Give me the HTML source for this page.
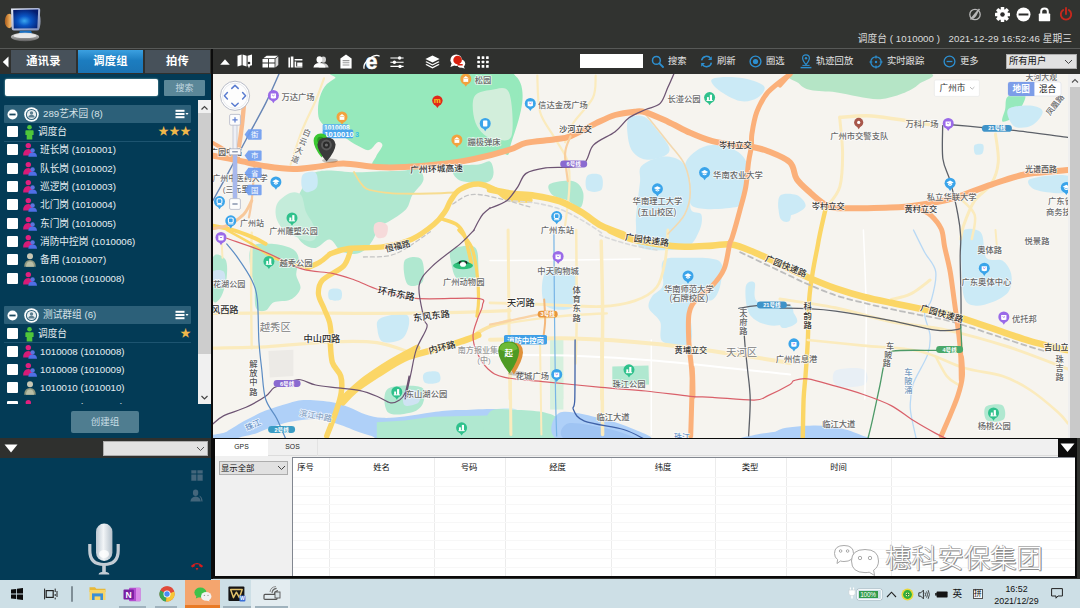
<!DOCTYPE html>
<html lang="zh-CN">
<head>
<meta charset="utf-8">
<title>调度台</title>
<style>
*{box-sizing:border-box;margin:0;padding:0}
html,body{width:1080px;height:608px;overflow:hidden;background:#313330}
body{position:relative;font-family:"Liberation Sans","Noto Sans CJK SC",sans-serif;font-size:9.7px;color:#e8eef2}
.abs{position:absolute}
#top{left:0;top:0;width:1080px;height:49px;background:#313330;border-bottom:1px solid #575957}
#status{letter-spacing:0.08px;right:8px;top:31px;height:16px;line-height:16px;font-size:9.7px;color:#dcdcdc;white-space:pre}
#tabrow{left:0;top:49px;width:1080px;height:25px;background:#2f302e}
.tab{top:50px;height:23px;width:65px;line-height:22px;text-align:center;font-size:11.3px;font-weight:bold;color:#fff;background:#47515a;letter-spacing:0.2px}
.tab.on{background:linear-gradient(#3ba0e0,#1c7dc0 45%,#1b74b4)}
#left{left:0;top:74px;width:211px;height:364px;background:#033b56}
#vline{left:211px;top:49px;width:2px;height:531px;background:#0c0c0c}
#sinput{left:5px;top:79px;width:153px;height:17px;background:#fff;border-radius:2px;box-shadow:0 0 2px #9cc}
#sbtn{left:164px;top:80px;width:41px;height:16px;background:#5b8798;color:#c3d8e0;font-size:9px;line-height:16px;text-align:center;border-radius:1px}
.ghead{left:4px;width:187px;height:18px;background:#2c6079;border-radius:1px}
.ghead span{position:absolute;left:39px;top:0;line-height:18px;font-size:9.7px;color:#d5e2e8}
.row{left:0;width:196px;height:18px}
.row .cb{position:absolute;left:7px;top:3px;width:11px;height:11px;background:#fff;border-radius:1px}
.row .tx{position:absolute;left:40px;top:0;line-height:18px;font-size:9.7px;color:#e6eef2;white-space:nowrap}
.row svg{position:absolute;left:22px;top:1px}
.stars{position:absolute;right:5px;top:0;line-height:17px;font-size:11px;color:#f0b84a;letter-spacing:0}
#lscroll{left:198px;top:100px;width:13px;height:304px;background:#f0f0f0}
#lthumb{left:198px;top:113px;width:13px;height:241px;background:#cdcdcd}
#mkgrp{left:71px;top:411px;width:68px;height:22px;background:#4f7d90;border-radius:2px;color:#c9dde5;font-size:9.5px;line-height:22px;text-align:center}
#sep{left:0;top:438px;width:211px;height:20px;background:#2f302e}
#sepdd{left:103px;top:441px;width:105px;height:15px;background:#e2e2e2;border:1px solid #adadad}
#low{left:0;top:458px;width:211px;height:122px;background:#033b56}
#tool{left:213px;top:49px;width:867px;height:25px;background:#2f302e}
.tl{top:54px;height:15px;line-height:15px;font-size:9.3px;color:#e4e4e4;white-space:nowrap}
#tinput{left:580px;top:54px;width:63px;height:14px;background:#fff}
#usersel{left:1006px;top:54px;width:71px;height:15px;background:#e1e1e1;border:1px solid #adadad;color:#111;font-size:9.3px;line-height:13px;padding-left:2px}
#mapwrap{left:213px;top:74px;width:855px;height:365px;background:#f6f4ef;overflow:hidden}
#mscroll{left:1068px;top:74px;width:12px;height:364px;background:#efefef}
#mthumb{left:1070px;top:87px;width:10px;height:351px;background:#c9c9c9}
#bp{left:213px;top:438px;width:864px;height:140px;background:#f0f0f0;border:2px solid #0a0a0a}
#bptabs{left:215px;top:439px;width:860px;height:17px;background:#f0f0f0;border-bottom:1px solid #dcdcdc}
.bt{top:439px;height:17px;line-height:16px;font-size:6.8px;color:#222;text-align:center}
#bpdd{left:219px;top:461px;width:69px;height:14px;background:#e1e1e1;border:1px solid #adadad;color:#111;font-size:8.4px;line-height:12px;padding-left:1px}
#tbl{left:292px;top:457px;width:783px;height:119px;background:#fff;border-left:1px solid #828790;border-top:1px solid #828790}
.th{top:459px;height:16px;line-height:16px;font-size:8.4px;color:#111;text-align:center;width:40px;margin-left:-20px}
.cl{top:458px;width:1px;height:118px;background:#ececec}
#bpbtn{left:1058px;top:439px;width:18px;height:18px;background:#0c0c0c}
#task{left:0;top:579px;width:1080px;height:29px;background:#cddfe6}
#wm{left:885px;top:541px;font-size:26.3px;line-height:36px;color:#fff;white-space:nowrap;text-shadow:1px 1px 0 #8c8c8c,-0.6px -0.6px 0 #b4b4b4,1px 0 0 #9a9a9a,0 1px 0 #9a9a9a;font-weight:300}
.tk{color:#111;font-size:10.5px;line-height:12px;white-space:nowrap}
</style>
</head>
<body>
<div id="top" class="abs"></div>
<svg class="abs" style="left:3px;top:5px" width="40" height="38" viewBox="0 0 40 38">
<defs><radialGradient id="lgscr" cx="0.45" cy="0.6" r="0.65"><stop offset="0" stop-color="#3aa8f0"/><stop offset="0.4" stop-color="#0a55c4"/><stop offset="1" stop-color="#051c6e"/></radialGradient>
<linearGradient id="lgor" x1="0" x2="1"><stop offset="0" stop-color="#a85a18"/><stop offset="0.55" stop-color="#e8a858"/><stop offset="1" stop-color="#d8d0c0"/></linearGradient>
<linearGradient id="lgbase" x1="0" x2="0" y1="0" y2="1"><stop offset="0" stop-color="#e6e6e6"/><stop offset="1" stop-color="#5e5e5e"/></linearGradient>
<linearGradient id="lgfr" x1="0" x2="1" y1="0" y2="1"><stop offset="0" stop-color="#e8ecf8"/><stop offset="0.5" stop-color="#a8b4d8"/><stop offset="1" stop-color="#7d8cb8"/></linearGradient></defs>
<ellipse cx="6.2" cy="16" rx="4.4" ry="7.2" fill="url(#lgor)"/>
<ellipse cx="35.2" cy="16" rx="2.4" ry="8.6" fill="#8e96aa"/>
<path d="M8 3.6 L35 3.1 Q37.4 3.1 37.2 5.5 L36.2 23.4 Q36.1 25.6 33.8 25.6 L10.8 25.4 Q8.8 25.4 8.7 23.4 Z" fill="url(#lgfr)"/>
<path d="M10.2 5 L35.2 4.6 L34.3 23.2 L10.8 23.4 Z" fill="url(#lgscr)"/>
<path d="M17 25.8 H28 L29.5 29.5 H15.5 Z" fill="#1a6fc0"/>
<ellipse cx="22" cy="32" rx="14.2" ry="4.2" fill="url(#lgbase)"/>
<ellipse cx="22" cy="30.8" rx="11.5" ry="2.3" fill="#e9e9e9"/>
</svg>
<svg class="abs" style="left:968px;top:8px" width="14" height="13" viewBox="0 0 14 13"><circle cx="7" cy="6.5" r="5.2" fill="none" stroke="#b8b8b8" stroke-width="1.3"/><path d="M2.5 11.5 L11.5 1" stroke="#b8b8b8" stroke-width="1.5"/><path d="M4.2 11.6 Q5 6 10.4 2.2 Q9.6 8.2 4.2 11.6Z" fill="#b8b8b8"/></svg><svg class="abs" style="left:995px;top:7px" width="15" height="15" viewBox="0 0 14.6 14.6"><rect x="5.6" y="0" width="3.4" height="4" rx="0.5" transform="rotate(0 7.3 7.3)" fill="#fff"/><rect x="5.6" y="0" width="3.4" height="4" rx="0.5" transform="rotate(45 7.3 7.3)" fill="#fff"/><rect x="5.6" y="0" width="3.4" height="4" rx="0.5" transform="rotate(90 7.3 7.3)" fill="#fff"/><rect x="5.6" y="0" width="3.4" height="4" rx="0.5" transform="rotate(135 7.3 7.3)" fill="#fff"/><rect x="5.6" y="0" width="3.4" height="4" rx="0.5" transform="rotate(180 7.3 7.3)" fill="#fff"/><rect x="5.6" y="0" width="3.4" height="4" rx="0.5" transform="rotate(225 7.3 7.3)" fill="#fff"/><rect x="5.6" y="0" width="3.4" height="4" rx="0.5" transform="rotate(270 7.3 7.3)" fill="#fff"/><rect x="5.6" y="0" width="3.4" height="4" rx="0.5" transform="rotate(315 7.3 7.3)" fill="#fff"/><circle cx="7.3" cy="7.3" r="5.4" fill="#fff"/><circle cx="7.3" cy="7.3" r="2.2" fill="#2c2c2c"/></svg><svg class="abs" style="left:1016px;top:7px" width="15" height="15" viewBox="0 0 15 15"><circle cx="7.5" cy="7.5" r="7" fill="#fff"/><rect x="2.6" y="6.5" width="9.8" height="2" fill="#2c2c2c"/></svg><svg class="abs" style="left:1038px;top:7px" width="13" height="15" viewBox="0 0 13 15"><path d="M3.2 7 V4.6 Q3.2 1.6 6.5 1.6 Q9.8 1.6 9.8 4.6 V7" fill="none" stroke="#fff" stroke-width="2"/><rect x="0.8" y="6.6" width="11.4" height="7.6" rx="0.6" fill="#fff"/></svg><svg class="abs" style="left:1059px;top:7px" width="14" height="14" viewBox="0 0 14 14"><path d="M4.2 3 A5.2 5.2 0 1 0 9.8 3" fill="none" stroke="#c4281d" stroke-width="1.9" stroke-linecap="round"/><path d="M7 1 V7" stroke="#c4281d" stroke-width="1.9" stroke-linecap="round"/></svg>
<div id="status" class="abs">调度台 ( 1010000 )   2021-12-29 16:52:46 星期三</div>
<div id="tabrow" class="abs"></div>
<div id="tool" class="abs"></div>
<svg class="abs" style="left:2px;top:56px" width="8" height="12" viewBox="0 0 8 12"><path d="M6.5 0.5 L0.8 6 L6.5 11.5 Z" fill="#fff"/></svg>
<div class="abs tab" style="left:11px">通讯录</div>
<div class="abs tab on" style="left:78px">调度组</div>
<div class="abs tab" style="left:145px">拍传</div>
<div id="left" class="abs"></div>
<div id="sinput" class="abs"></div>
<div id="sbtn" class="abs">搜索</div>
<div class="abs ghead" style="top:105px"><svg class="abs" style="left:3px;top:4px" width="11" height="11" viewBox="0 0 11 11"><circle cx="5.5" cy="5.5" r="5" fill="#fff"/><rect x="2.4" y="4.6" width="6.2" height="1.8" fill="#1d4a60"/></svg><svg class="abs" style="left:19px;top:1px" width="17" height="17" viewBox="0 0 17 17"><circle cx="8.5" cy="8.5" r="7.3" fill="#fff"/><circle cx="8.5" cy="8.5" r="5.6" fill="#2c6079"/><circle cx="8.5" cy="8.5" r="4.6" fill="#e8eef0"/><circle cx="8.5" cy="7" r="1.7" fill="#5c7f90"/><path d="M5.3 11.6 Q5.5 8.8 8.5 8.8 Q11.5 8.8 11.7 11.6 Z" fill="#5c7f90"/></svg><span>289艺术园 (8)</span><svg class="abs" style="left:171px;top:4px" width="14" height="10" viewBox="0 0 14 10"><rect x="0.5" y="0.8" width="9" height="2" fill="#fff"/><rect x="0.5" y="4" width="9" height="2" fill="#fff"/><rect x="0.5" y="7.2" width="9" height="2" fill="#fff"/><path d="M10.5 4 H13.5 L12 6 Z" fill="#fff"/></svg></div>
<div class="abs row" style="top:123.0px"><div class="cb"></div><svg width="15" height="16" viewBox="0 0 15 16"><circle cx="7.5" cy="3.2" r="2.3" fill="#4fc63a"/><path d="M4.2 6.2 H10.8 Q11.6 6.2 11.6 7 V11 H10.3 V15.5 H4.7 V11 H3.4 V7 Q3.4 6.2 4.2 6.2Z" fill="#4fc63a"/></svg><div class="tx" style="left:38px">调度台</div><div class="stars">★★★</div></div>
<div class="abs row" style="top:141.3px"><div class="cb"></div><svg width="16" height="16" viewBox="0 0 16 16"><circle cx="6.3" cy="3.6" r="2.7" fill="#e0207e"/><path d="M1.2 13.5 Q1.2 7 6.3 7 Q11 7 11.3 13.5 Z" fill="#d81b78"/><circle cx="10.6" cy="8.4" r="2.2" fill="#5a74e0"/><path d="M6.3 14.8 Q6.5 10.6 10.6 10.6 Q14.8 10.6 15 14.8 Z" fill="#4f6fe6"/></svg><div class="tx">班长岗 (1010001)</div></div>
<div class="abs row" style="top:159.6px"><div class="cb"></div><svg width="16" height="16" viewBox="0 0 16 16"><circle cx="6.3" cy="3.6" r="2.7" fill="#e0207e"/><path d="M1.2 13.5 Q1.2 7 6.3 7 Q11 7 11.3 13.5 Z" fill="#d81b78"/><circle cx="10.6" cy="8.4" r="2.2" fill="#5a74e0"/><path d="M6.3 14.8 Q6.5 10.6 10.6 10.6 Q14.8 10.6 15 14.8 Z" fill="#4f6fe6"/></svg><div class="tx">队长岗 (1010002)</div></div>
<div class="abs row" style="top:177.9px"><div class="cb"></div><svg width="16" height="16" viewBox="0 0 16 16"><circle cx="6.3" cy="3.6" r="2.7" fill="#e0207e"/><path d="M1.2 13.5 Q1.2 7 6.3 7 Q11 7 11.3 13.5 Z" fill="#d81b78"/><circle cx="10.6" cy="8.4" r="2.2" fill="#5a74e0"/><path d="M6.3 14.8 Q6.5 10.6 10.6 10.6 Q14.8 10.6 15 14.8 Z" fill="#4f6fe6"/></svg><div class="tx">巡逻岗 (1010003)</div></div>
<div class="abs row" style="top:196.2px"><div class="cb"></div><svg width="16" height="16" viewBox="0 0 16 16"><circle cx="6.3" cy="3.6" r="2.7" fill="#e0207e"/><path d="M1.2 13.5 Q1.2 7 6.3 7 Q11 7 11.3 13.5 Z" fill="#d81b78"/><circle cx="10.6" cy="8.4" r="2.2" fill="#5a74e0"/><path d="M6.3 14.8 Q6.5 10.6 10.6 10.6 Q14.8 10.6 15 14.8 Z" fill="#4f6fe6"/></svg><div class="tx">北门岗 (1010004)</div></div>
<div class="abs row" style="top:214.6px"><div class="cb"></div><svg width="16" height="16" viewBox="0 0 16 16"><circle cx="6.3" cy="3.6" r="2.7" fill="#e0207e"/><path d="M1.2 13.5 Q1.2 7 6.3 7 Q11 7 11.3 13.5 Z" fill="#d81b78"/><circle cx="10.6" cy="8.4" r="2.2" fill="#5a74e0"/><path d="M6.3 14.8 Q6.5 10.6 10.6 10.6 Q14.8 10.6 15 14.8 Z" fill="#4f6fe6"/></svg><div class="tx">东门岗 (1010005)</div></div>
<div class="abs row" style="top:232.9px"><div class="cb"></div><svg width="16" height="16" viewBox="0 0 16 16"><circle cx="6.3" cy="3.6" r="2.7" fill="#e0207e"/><path d="M1.2 13.5 Q1.2 7 6.3 7 Q11 7 11.3 13.5 Z" fill="#d81b78"/><circle cx="10.6" cy="8.4" r="2.2" fill="#5a74e0"/><path d="M6.3 14.8 Q6.5 10.6 10.6 10.6 Q14.8 10.6 15 14.8 Z" fill="#4f6fe6"/></svg><div class="tx">消防中控岗 (1010006)</div></div>
<div class="abs row" style="top:251.2px"><div class="cb"></div><svg width="16" height="16" viewBox="0 0 16 16"><circle cx="8" cy="4.3" r="3" fill="#c9c8b4"/><path d="M2.2 14.8 Q2.4 8 8 8 Q13.6 8 13.8 14.8 Z" fill="#8f977f"/><path d="M4 14.8 Q4.2 9.5 8 9.5 Q11.8 9.5 12 14.8 Z" fill="#b9bea6"/></svg><div class="tx">备用 (1010007)</div></div>
<div class="abs row" style="top:269.5px"><div class="cb"></div><svg width="16" height="16" viewBox="0 0 16 16"><circle cx="6.3" cy="3.6" r="2.7" fill="#e0207e"/><path d="M1.2 13.5 Q1.2 7 6.3 7 Q11 7 11.3 13.5 Z" fill="#d81b78"/><circle cx="10.6" cy="8.4" r="2.2" fill="#5a74e0"/><path d="M6.3 14.8 Q6.5 10.6 10.6 10.6 Q14.8 10.6 15 14.8 Z" fill="#4f6fe6"/></svg><div class="tx">1010008 (1010008)</div></div>
<div class="abs" style="left:4px;top:141px;width:187px;height:1px;background:#1d5470"></div>
<div class="abs ghead" style="top:306px"><svg class="abs" style="left:3px;top:4px" width="11" height="11" viewBox="0 0 11 11"><circle cx="5.5" cy="5.5" r="5" fill="#fff"/><rect x="2.4" y="4.6" width="6.2" height="1.8" fill="#1d4a60"/></svg><svg class="abs" style="left:19px;top:1px" width="17" height="17" viewBox="0 0 17 17"><circle cx="8.5" cy="8.5" r="7.3" fill="#fff"/><circle cx="8.5" cy="8.5" r="5.6" fill="#2c6079"/><circle cx="8.5" cy="8.5" r="4.6" fill="#e8eef0"/><circle cx="8.5" cy="7" r="1.7" fill="#5c7f90"/><path d="M5.3 11.6 Q5.5 8.8 8.5 8.8 Q11.5 8.8 11.7 11.6 Z" fill="#5c7f90"/></svg><span>测试群组 (6)</span><svg class="abs" style="left:171px;top:4px" width="14" height="10" viewBox="0 0 14 10"><rect x="0.5" y="0.8" width="9" height="2" fill="#fff"/><rect x="0.5" y="4" width="9" height="2" fill="#fff"/><rect x="0.5" y="7.2" width="9" height="2" fill="#fff"/><path d="M10.5 4 H13.5 L12 6 Z" fill="#fff"/></svg></div>
<div class="abs row" style="top:324.5px"><div class="cb"></div><svg width="15" height="16" viewBox="0 0 15 16"><circle cx="7.5" cy="3.2" r="2.3" fill="#4fc63a"/><path d="M4.2 6.2 H10.8 Q11.6 6.2 11.6 7 V11 H10.3 V15.5 H4.7 V11 H3.4 V7 Q3.4 6.2 4.2 6.2Z" fill="#4fc63a"/></svg><div class="tx" style="left:38px">调度台</div><div class="stars">★</div></div>
<div class="abs row" style="top:342.8px"><div class="cb"></div><svg width="16" height="16" viewBox="0 0 16 16"><circle cx="6.3" cy="3.6" r="2.7" fill="#e0207e"/><path d="M1.2 13.5 Q1.2 7 6.3 7 Q11 7 11.3 13.5 Z" fill="#d81b78"/><circle cx="10.6" cy="8.4" r="2.2" fill="#5a74e0"/><path d="M6.3 14.8 Q6.5 10.6 10.6 10.6 Q14.8 10.6 15 14.8 Z" fill="#4f6fe6"/></svg><div class="tx">1010008 (1010008)</div></div>
<div class="abs row" style="top:361.1px"><div class="cb"></div><svg width="16" height="16" viewBox="0 0 16 16"><circle cx="6.3" cy="3.6" r="2.7" fill="#e0207e"/><path d="M1.2 13.5 Q1.2 7 6.3 7 Q11 7 11.3 13.5 Z" fill="#d81b78"/><circle cx="10.6" cy="8.4" r="2.2" fill="#5a74e0"/><path d="M6.3 14.8 Q6.5 10.6 10.6 10.6 Q14.8 10.6 15 14.8 Z" fill="#4f6fe6"/></svg><div class="tx">1010009 (1010009)</div></div>
<div class="abs row" style="top:379.4px"><div class="cb"></div><svg width="16" height="16" viewBox="0 0 16 16"><circle cx="8" cy="4.3" r="3" fill="#c9c8b4"/><path d="M2.2 14.8 Q2.4 8 8 8 Q13.6 8 13.8 14.8 Z" fill="#8f977f"/><path d="M4 14.8 Q4.2 9.5 8 9.5 Q11.8 9.5 12 14.8 Z" fill="#b9bea6"/></svg><div class="tx">1010010 (1010010)</div></div>
<div class="abs" style="left:4px;top:342px;width:187px;height:1px;background:#1d5470"></div>
<div class="abs row" style="top:398.0px;height:6px;overflow:hidden"><div class="cb"></div><svg width="16" height="16" viewBox="0 0 16 16"><circle cx="6.3" cy="3.6" r="2.7" fill="#e0207e"/><path d="M1.2 13.5 Q1.2 7 6.3 7 Q11 7 11.3 13.5 Z" fill="#d81b78"/><circle cx="10.6" cy="8.4" r="2.2" fill="#5a74e0"/><path d="M6.3 14.8 Q6.5 10.6 10.6 10.6 Q14.8 10.6 15 14.8 Z" fill="#4f6fe6"/></svg><div class="tx">1010011 (1010011)</div></div>
<div id="lscroll" class="abs"></div>
<div id="lthumb" class="abs"></div>
<svg class="abs" style="left:198px;top:100px" width="13" height="304" viewBox="0 0 13 304"><path d="M3.5 9.5 L6.5 6.5 L9.5 9.5" fill="none" stroke="#444" stroke-width="1.2"/><path d="M3.5 296 L6.5 299 L9.5 296" fill="none" stroke="#444" stroke-width="1.2"/></svg>
<div id="mkgrp" class="abs">创建组</div>
<div id="sep" class="abs"></div>
<svg class="abs" style="left:4px;top:444px" width="14" height="9" viewBox="0 0 14 9"><path d="M0.5 0.5 H13.5 L7 8.5 Z" fill="#fff"/></svg>
<div id="sepdd" class="abs"></div>
<svg class="abs" style="left:196px;top:446px" width="9" height="6" viewBox="0 0 9 6"><path d="M1 1 L4.5 4.5 L8 1" fill="none" stroke="#555" stroke-width="1"/></svg>
<div id="low" class="abs"></div>
<svg class="abs" style="left:191px;top:470px" width="12" height="11" viewBox="0 0 12 11"><path d="M0.3 0.3 H5.4 V3.6 H0.3Z M6.4 0.3 H11.7 V3.6 H6.4Z M0.3 4.6 H5.4 V10.7 H0.3Z M6.4 4.6 H11.7 V10.7 H6.4Z" fill="#44667b"/></svg><svg class="abs" style="left:190px;top:489px" width="13" height="13" viewBox="0 0 13 13"><ellipse cx="5.6" cy="3.8" rx="2.7" ry="3.3" fill="#44667b"/><path d="M0.4 12.6 Q0.8 7.6 5.6 7.4 Q10.4 7.6 10.8 12.6Z" fill="#44667b"/><path d="M9 6.4 Q12.4 7.4 12.6 12.6 H11.4 Q11.4 8.6 9 6.4Z" fill="#44667b"/></svg><svg class="abs" style="left:190px;top:561px" width="14" height="10" viewBox="0 0 14 10"><path d="M0.8 5 Q7 -1.2 13.2 5 L11.6 6.6 L9.2 5.2 V3.6 Q7 2.8 4.8 3.6 V5.2 L2.4 6.6Z" fill="#d81c1c"/><path d="M5.6 7 H8.4 L7 9.4Z" fill="#d81c1c"/></svg><svg class="abs" style="left:86px;top:521px" width="36" height="56" viewBox="0 0 36 56">
<defs><linearGradient id="mcg" x1="0" x2="1"><stop offset="0" stop-color="#bcc8d2"/><stop offset="0.45" stop-color="#f2f5f7"/><stop offset="1" stop-color="#b4c0ca"/></linearGradient></defs>
<path d="M3.8 23 V29.5 Q3.8 43.5 18 43.5 Q32.2 43.5 32.2 29.5 V23" fill="none" stroke="#c3ccd4" stroke-width="3.2"/>
<rect x="16.2" y="43" width="3.6" height="9" fill="#c3ccd4"/>
<path d="M12.6 53.6 Q12.8 50.8 18 50.8 Q23.2 50.8 23.4 53.6Z" fill="#c3ccd4"/>
<rect x="10" y="2.5" width="16.4" height="37.5" rx="8.2" fill="url(#mcg)"/>
<ellipse cx="18" cy="33" rx="5" ry="4" fill="#fff" opacity="0.8"/>
</svg>
<div id="vline" class="abs"></div>
<svg class="abs" style="left:220px;top:59px" width="10" height="6" viewBox="0 0 10 6"><path d="M5 0.2 L9.8 5.8 H0.2Z" fill="#fff"/></svg><svg class="abs" style="left:237px;top:54px" width="16" height="15" viewBox="0 0 16 15"><path d="M0.5 1.8 L4.6 0.6 L4.6 11.2 L0.5 12.4Z M5.6 0.6 L9.6 1.8 V12.4 L5.6 11.2Z M10.6 1.8 L15 0.6 V11.2 L13 11.8 L12 14.2 L11 11.9 L10.6 12.4Z" fill="#fff"/><circle cx="12" cy="9" r="1.3" fill="#2b2b2b"/></svg><svg class="abs" style="left:262px;top:55px" width="17" height="13" viewBox="0 0 17 13"><path d="M0.5 4 H6 V7.6 H0.5Z M6.9 4 H12.6 V7.6 H6.9Z M0.5 8.5 H6 V12.4 H0.5Z M6.9 8.5 H12.6 V12.4 H6.9Z" fill="#fff"/><path d="M1.4 3.2 L4.6 0.8 H16 L12.8 3.2Z" fill="#fff"/><path d="M13.4 3.8 L16.3 1.6 V10 L13.4 12.4Z" fill="#d8d8d8"/></svg><svg class="abs" style="left:288px;top:56px" width="15" height="12" viewBox="0 0 15 12"><path d="M0.4 1.6 H2 V11.6 H0.4Z M2.8 0.4 H5.4 V11.6 H2.8Z" fill="#fff"/><path d="M6.6 3 H14.4 V4.6 H6.6Z M6.6 5.6 H8.2 V11.6 H6.6Z M9.2 6.6 H14.4 V10.2 H9.2Z M6.6 10.6 H14.4 V11.6 H6.6Z" fill="#fff"/></svg><svg class="abs" style="left:313px;top:56px" width="16" height="12" viewBox="0 0 16 12"><ellipse cx="10.4" cy="3.6" rx="2.6" ry="3.2" fill="#cfcfcf"/><path d="M5.6 11.6 Q6 7.4 10.4 7.2 Q15 7.4 15.6 11.6Z" fill="#cfcfcf"/><ellipse cx="6.4" cy="3.6" rx="2.9" ry="3.4" fill="#fff"/><path d="M0.4 11.6 Q1 7 6.4 7 Q11.8 7 12.4 11.6Z" fill="#fff"/></svg><svg class="abs" style="left:340px;top:54px" width="12" height="15" viewBox="0 0 12 15"><path d="M6 0.4 L11.6 4.4 V14.4 H0.4 V4.4Z" fill="#fff"/><path d="M2.6 6.6 H9.4 M2.6 8.8 H9.4 M2.6 11 H9.4" stroke="#9a9a9a" stroke-width="1.1"/></svg><svg class="abs" style="left:362px;top:52px" width="20" height="19" viewBox="0 0 20 19"><text x="3.6" y="16.6" font-family="Liberation Sans,sans-serif" font-weight="bold" font-size="21.5" fill="#fff" stroke="#fff" stroke-width="0.5">e</text><path d="M2.2 16.8 Q0.6 12.4 7.4 6.6 Q13.8 1.6 17.6 4.2" fill="none" stroke="#fff" stroke-width="1.3"/></svg><svg class="abs" style="left:390px;top:56px" width="14" height="12" viewBox="0 0 14 12"><path d="M0.4 2 H13.6 M0.4 6.2 H13.6 M0.4 10.4 H13.6" stroke="#fff" stroke-width="1.1"/><circle cx="9.6" cy="2" r="1.7" fill="#fff"/><circle cx="4.4" cy="6.2" r="1.7" fill="#fff"/><circle cx="10" cy="10.4" r="1.7" fill="#fff"/></svg><svg class="abs" style="left:425px;top:55px" width="15" height="14" viewBox="0 0 15 14"><path d="M7.5 0.4 L14.6 4 L7.5 7.6 L0.4 4Z" fill="#fff"/><path d="M1.6 6.2 L0.4 6.9 L7.5 10.5 L14.6 6.9 L13.4 6.2 L7.5 9.2Z" fill="#fff"/><path d="M1.6 9.1 L0.4 9.8 L7.5 13.4 L14.6 9.8 L13.4 9.1 L7.5 12.1Z" fill="#fff"/></svg><svg class="abs" style="left:449px;top:54px" width="17" height="15" viewBox="0 0 17 15"><circle cx="7.2" cy="6.2" r="5.8" fill="#fff"/><path d="M2.6 9.6 L1.4 13 L5.4 11.4Z" fill="#fff"/><circle cx="12" cy="9.6" r="4.2" fill="#fff"/><path d="M14.4 12.6 L16 14.6 L12.4 13.8Z" fill="#fff"/><circle cx="8.6" cy="6" r="4.3" fill="#d8200f"/><rect x="8.4" y="10" width="5.4" height="1.6" rx="0.6" fill="#d8200f"/></svg><svg class="abs" style="left:477px;top:56px" width="12" height="12" viewBox="0 0 11.8 11.8"><rect x="0.3" y="0.3" width="2.6" height="2.6" rx="0.5" fill="#fff"/><rect x="0.3" y="4.6" width="2.6" height="2.6" rx="0.5" fill="#fff"/><rect x="0.3" y="8.9" width="2.6" height="2.6" rx="0.5" fill="#fff"/><rect x="4.6" y="0.3" width="2.6" height="2.6" rx="0.5" fill="#fff"/><rect x="4.6" y="4.6" width="2.6" height="2.6" rx="0.5" fill="#fff"/><rect x="4.6" y="8.9" width="2.6" height="2.6" rx="0.5" fill="#fff"/><rect x="8.9" y="0.3" width="2.6" height="2.6" rx="0.5" fill="#fff"/><rect x="8.9" y="4.6" width="2.6" height="2.6" rx="0.5" fill="#fff"/><rect x="8.9" y="8.9" width="2.6" height="2.6" rx="0.5" fill="#fff"/></svg><div id="tinput" class="abs"></div><svg class="abs" style="left:651px;top:55px" width="13" height="13" viewBox="0 0 13 13"><circle cx="5.4" cy="5.4" r="3.9" fill="none" stroke="#2d8fd0" stroke-width="1.5"/><path d="M8.4 8.4 L12 12" stroke="#2d8fd0" stroke-width="1.8" stroke-linecap="round"/></svg><div class="abs tl" style="left:668px">搜索</div><svg class="abs" style="left:700px;top:55px" width="13" height="13" viewBox="0 0 13 13"><path d="M1.6 5.4 A5 5 0 0 1 10.6 3.4" fill="none" stroke="#2d8fd0" stroke-width="1.5"/><path d="M11.4 7.6 A5 5 0 0 1 2.4 9.6" fill="none" stroke="#2d8fd0" stroke-width="1.5"/><path d="M11.8 1.2 V5 H8Z" fill="#2d8fd0"/><path d="M1.2 11.8 V8 H5Z" fill="#2d8fd0"/></svg><div class="abs tl" style="left:717px">刷新</div><svg class="abs" style="left:749px;top:55px" width="13" height="13" viewBox="0 0 13 13"><circle cx="6.5" cy="6.5" r="5.4" fill="none" stroke="#2d8fd0" stroke-width="1.4"/><circle cx="6.5" cy="6.5" r="2.6" fill="#2d8fd0"/></svg><div class="abs tl" style="left:766px">圈选</div><svg class="abs" style="left:800px;top:54px" width="12" height="15" viewBox="0 0 12 15"><path d="M6 0.8 Q9.4 0.8 9.4 4.2 Q9.4 6.4 6 10.6 Q2.6 6.4 2.6 4.2 Q2.6 0.8 6 0.8Z" fill="none" stroke="#2d8fd0" stroke-width="1.2"/><circle cx="6" cy="4.2" r="1.2" fill="#2d8fd0"/><path d="M0.6 13.6 H11.4" stroke="#2d8fd0" stroke-width="1.4"/><path d="M2.4 11.4 H9.6" stroke="#2d8fd0" stroke-width="1"/></svg><div class="abs tl" style="left:816px">轨迹回放</div><svg class="abs" style="left:869px;top:55px" width="14" height="14" viewBox="0 0 14 14"><circle cx="7" cy="7" r="5.2" fill="none" stroke="#2d8fd0" stroke-width="1.3"/><path d="M7 0.4 V3.4 M7 10.6 V13.6 M0.4 7 H3.4 M10.6 7 H13.6" stroke="#2d8fd0" stroke-width="1.2"/><circle cx="7" cy="7" r="1.2" fill="#2d8fd0"/></svg><div class="abs tl" style="left:887px">实时跟踪</div><svg class="abs" style="left:943px;top:55px" width="13" height="13" viewBox="0 0 13 13"><circle cx="6.5" cy="6.5" r="5.4" fill="none" stroke="#2d8fd0" stroke-width="1.3"/><path d="M3.6 6.5 H9.4" stroke="#2d8fd0" stroke-width="1.3"/></svg><div class="abs tl" style="left:960px">更多</div><div id="usersel" class="abs">所有用户</div><svg class="abs" style="left:1064px;top:59px" width="9" height="6" viewBox="0 0 9 6"><path d="M1 1 L4.5 4.5 L8 1" fill="none" stroke="#444" stroke-width="1"/></svg>
<div id="mapwrap" class="abs">
<svg class="abs" style="left:0;top:0" width="855" height="364" viewBox="213 74 855 364"><path d="M345.1 72.2 C316.0 73.2 338.5 75.9 335.1 78.3 C331.7 80.8 327.3 82.8 324.6 86.7 C321.8 90.6 319.7 96.7 318.7 101.7 C317.7 106.7 317.8 112.7 318.4 116.4 C319.1 120.1 320.8 121.8 322.6 123.9 C324.5 126.1 326.1 127.1 329.6 129.2 C333.0 131.4 338.8 134.0 343.5 136.7 C348.1 139.5 353.1 143.4 357.4 145.6 C361.6 147.8 365.7 150.6 369.0 150.1 C372.4 149.5 375.4 143.0 377.7 142.3 C379.9 141.5 382.7 143.2 382.4 145.6 C382.1 148.0 377.4 153.4 376.0 156.7 C374.6 160.1 369.3 164.3 374.0 165.9 C378.8 167.6 392.6 167.2 404.6 166.8 C416.7 166.3 434.7 164.5 446.3 163.1 C457.9 161.8 465.3 160.2 474.1 158.4 C482.9 156.6 493.2 154.0 499.2 152.3 C505.1 150.6 508.2 161.8 510.0 148.4 C511.8 135.1 537.5 84.9 510.0 72.2 C482.5 59.5 374.3 71.2 345.1 72.2Z" fill="#96e9bc"/>
<path d="M490.0 72.2 C493.5 60.0 506.4 70.7 510.9 72.2 C515.3 73.7 515.7 77.3 517.0 81.1 C518.2 84.9 518.8 90.9 518.4 95.0 C517.9 99.2 516.9 103.4 514.5 106.1 C512.1 108.9 506.6 108.5 503.9 111.7 C501.2 114.9 499.7 120.6 498.3 125.6 C497.0 130.6 497.0 138.4 495.6 141.7 C494.2 145.1 490.9 157.2 490.0 145.6 C489.1 134.0 486.5 84.5 490.0 72.2Z" fill="#96e9bc"/>
<path d="M476.1 94.5 C479.1 91.8 485.3 90.4 490.8 90.0 C496.3 89.6 505.4 84.7 508.9 92.2 C512.4 99.8 513.8 127.5 511.7 135.3 C509.6 143.2 501.0 139.6 496.4 139.5 C491.7 139.4 487.3 137.3 483.9 134.5 C480.4 131.7 477.4 127.6 475.5 122.8 C473.7 118.1 472.7 110.9 472.7 106.1 C472.8 101.4 473.1 97.2 476.1 94.5Z" fill="#d2eedb"/>
<path d="M303.1 186.8 C305.8 181.9 307.5 177.0 311.5 174.3 C315.4 171.6 319.6 171.0 326.8 170.6 C334.0 170.3 346.2 172.2 354.6 172.3 C362.9 172.5 368.5 171.8 376.8 171.5 C385.2 171.2 397.9 171.3 404.6 170.6 C411.3 170.0 414.0 165.8 417.1 167.3 C420.3 168.8 424.3 175.2 423.5 179.8 C422.7 184.5 415.3 190.3 412.4 195.1 C409.5 200.0 409.8 204.8 406.3 209.0 C402.8 213.2 395.7 217.1 391.3 220.1 C386.8 223.2 382.7 224.0 379.6 227.4 C376.5 230.7 375.0 236.5 372.7 240.2 C370.3 243.8 368.7 247.0 365.7 249.3 C362.7 251.6 358.7 253.8 354.6 254.1 C350.4 254.3 344.8 253.1 340.7 250.7 C336.5 248.3 333.7 240.1 329.6 239.6 C325.4 239.1 320.3 247.5 315.7 247.9 C311.0 248.4 305.5 246.1 301.8 242.4 C298.0 238.7 294.4 232.2 293.4 225.7 C292.4 219.2 294.0 209.9 295.6 203.5 C297.3 197.0 300.5 191.6 303.1 186.8Z" fill="#b0e8d0"/>
<path d="M452.7 170.4 C453.3 168.3 455.7 166.5 460.0 165.5 C464.3 164.5 473.7 165.2 478.7 164.5 C483.7 163.8 487.5 160.2 490.0 161.5 C492.5 162.8 493.6 169.1 493.6 172.3 C493.6 175.6 492.5 179.2 490.0 181.0 C487.5 182.8 483.1 182.9 478.7 183.0 C474.3 183.1 467.5 182.4 463.8 181.6 C460.1 180.8 458.2 179.9 456.4 178.0 C454.5 176.1 452.1 172.5 452.7 170.4Z" fill="#b0e8d0"/>
<path d="M374.6 224.0 C375.8 222.3 378.8 221.7 381.0 222.0 C383.2 222.3 386.8 223.7 387.6 226.0 C388.4 228.3 387.6 234.0 386.0 236.0 C384.4 238.0 380.0 238.7 378.0 238.0 C376.0 237.3 374.6 234.3 374.0 232.0 C373.4 229.7 373.4 225.7 374.6 224.0Z" fill="#f6dada"/>
<path d="M354.0 172.0 C355.0 173.7 357.8 179.2 360.0 182.0 C362.2 184.8 362.8 187.2 367.0 189.0 C371.2 190.8 378.8 191.8 385.0 192.6 C391.2 193.4 396.5 193.5 404.0 193.7 C411.5 193.8 421.3 193.7 430.0 193.5 C438.7 193.3 451.7 192.7 456.0 192.5" fill="none" stroke="#f7dc90" stroke-width="1.8" stroke-linecap="round" stroke-linejoin="round"/>
<path d="M277.0 204.0 C279.2 199.5 286.0 194.5 290.0 193.0 C294.0 191.5 298.3 191.8 301.0 195.0 C303.7 198.2 304.0 207.2 306.0 212.0 C308.0 216.8 311.3 219.8 313.0 224.0 C314.7 228.2 316.8 234.2 316.0 237.0 C315.2 239.8 312.8 241.8 308.0 241.0 C303.2 240.2 292.2 235.5 287.0 232.0 C281.8 228.5 278.7 224.7 277.0 220.0 C275.3 215.3 274.8 208.5 277.0 204.0Z" fill="#c4ecda"/>
<path d="M251.7 246.7 C255.6 242.5 267.0 243.4 273.9 243.9 C280.9 244.4 289.2 246.7 293.4 249.5 C297.6 252.2 298.5 256.4 299.0 260.6 C299.4 264.8 296.0 269.9 296.2 274.5 C296.4 279.1 301.3 284.2 300.4 288.4 C299.4 292.6 295.0 297.2 290.6 299.5 C286.2 301.8 278.1 300.4 273.9 302.3 C269.8 304.1 268.6 309.7 265.6 310.6 C262.6 311.6 257.7 312.0 255.9 307.8 C254.0 303.7 255.4 292.1 254.5 285.6 C253.6 279.1 250.8 275.4 250.3 268.9 C249.9 262.4 247.8 250.9 251.7 246.7Z" fill="#b0e8d0"/>
<path d="M212.8 257.8 C214.9 251.1 223.0 255.9 225.3 259.2 C227.6 262.4 227.4 271.0 226.7 277.3 C226.0 283.5 223.4 293.0 221.1 296.7 C218.8 300.4 214.2 306.0 212.8 299.5 C211.4 293.0 210.7 264.5 212.8 257.8Z" fill="#b0e8d0"/>
<path d="M212.8 271.7 C214.6 269.4 222.0 269.4 223.9 271.7 C225.8 274.0 225.8 283.3 223.9 285.6 C222.0 287.9 214.6 287.9 212.8 285.6 C210.9 283.3 210.9 274.0 212.8 271.7Z" fill="#cfe3f3"/>
<path d="M404.6 260.6 C406.9 256.4 418.3 255.7 421.3 259.2 C424.3 262.7 425.0 277.3 422.7 281.4 C420.4 285.6 410.4 287.7 407.4 284.2 C404.4 280.7 402.3 264.8 404.6 260.6Z" fill="#b0e8d0"/>
<path d="M451.9 249.5 C455.7 246.7 469.7 244.4 474.1 246.7 C478.5 249.0 478.1 258.3 478.3 263.4 C478.5 268.5 479.0 274.7 475.5 277.3 C472.0 279.8 461.5 281.0 457.5 278.7 C453.4 276.3 452.3 268.2 451.3 263.4 C450.4 258.5 448.1 252.2 451.9 249.5Z" fill="#b0e8d0"/>
<path d="M549.8 184.0 C553.3 181.7 567.8 179.8 573.4 181.2 C579.0 182.6 582.0 187.9 583.1 192.3 C584.3 196.7 582.9 206.2 580.4 207.6 C577.8 209.0 572.5 202.8 567.8 200.7 C563.2 198.6 555.6 197.9 552.6 195.1 C549.5 192.3 546.3 186.3 549.8 184.0Z" fill="#b0e8d0"/>
<path d="M795.3 72.8 C816.1 70.9 904.0 70.9 924.6 72.8 C945.2 74.6 922.7 80.4 919.0 83.9 C915.3 87.4 908.8 91.1 902.3 93.6 C895.8 96.2 887.5 98.7 880.1 99.2 C872.7 99.7 865.3 97.6 857.8 96.4 C850.4 95.3 843.5 93.3 835.6 92.2 C827.7 91.2 816.6 91.4 810.6 90.0 C804.6 88.6 802.0 86.8 799.5 83.9 C796.9 81.0 774.4 74.6 795.3 72.8Z" fill="#b5e5c6"/>
<path d="M1008.0 96.4 C1011.2 94.1 1022.4 93.4 1024.7 95.0 C1027.0 96.6 1023.7 102.4 1021.9 106.1 C1020.0 109.9 1016.8 114.7 1013.5 117.3 C1010.3 119.8 1003.8 122.8 1002.4 121.4 C1001.0 120.0 1004.3 113.1 1005.2 108.9 C1006.1 104.8 1004.7 98.7 1008.0 96.4Z" fill="#96e9bc"/>
<path d="M387.9 388.7 C393.5 384.5 415.5 384.7 421.3 387.3 C427.1 389.8 424.6 399.7 422.7 403.9 C420.8 408.2 416.0 411.5 410.2 412.8 C404.4 414.2 391.6 416.3 387.9 412.3 C384.2 408.3 382.4 392.8 387.9 388.7Z" fill="#b0e8d0"/>
<path d="M404.6 391.4 C406.9 389.1 416.2 389.6 418.5 391.4 C420.8 393.3 420.8 400.2 418.5 402.6 C416.2 404.9 406.9 407.2 404.6 405.3 C402.3 403.5 402.3 393.8 404.6 391.4Z" fill="#cfe3f3"/>
<path d="M612.3 366.4 L648.5 365.6 L649.0 384.5 L612.3 385.9Z" fill="#b0e8d0"/>
<path d="M985.7 406.7 C988.3 404.2 999.4 403.3 1002.4 405.3 C1005.4 407.4 1006.4 416.7 1003.8 419.2 C1001.3 421.8 990.1 422.7 987.1 420.6 C984.1 418.5 983.2 409.3 985.7 406.7Z" fill="#b0e8d0"/>
<path d="M550.6 352.3 L562.8 352.3 L563.4 399.0 L550.1 399.0Z" fill="#d6f0de"/>
<path d="M550.1 340.0 L563.4 340.0 L563.4 409.5 L550.1 409.5Z" fill="#d6f0de"/>
<path d="M629.0 117.8 C631.8 114.9 639.7 114.7 644.3 116.7 C648.9 118.7 652.7 124.6 656.8 129.8 C661.0 135.0 668.2 143.4 669.3 147.8 C670.5 152.3 667.7 154.2 663.8 156.2 C659.8 158.1 650.9 160.4 645.7 159.5 C640.5 158.7 635.4 155.4 632.4 151.2 C629.3 147.0 628.2 140.1 627.6 134.5 C627.1 128.9 626.2 120.8 629.0 117.8Z" fill="#cbeaf6"/>
<path d="M641.5 165.9 C645.2 161.8 655.7 157.4 662.4 156.7 C669.1 156.1 677.1 157.7 681.8 161.8 C686.6 165.8 689.3 173.3 690.7 181.2 C692.2 189.1 689.0 203.5 690.7 209.0 C692.5 214.6 699.9 210.9 701.3 214.6 C702.7 218.3 701.9 225.7 699.1 231.3 C696.3 236.8 694.2 245.2 684.6 247.9 C675.0 250.7 649.6 251.6 641.5 247.9 C633.4 244.2 636.7 233.1 636.0 225.7 C635.3 218.3 636.7 210.9 637.4 203.5 C638.1 196.0 639.4 187.5 640.1 181.2 C640.8 175.0 637.8 170.0 641.5 165.9Z" fill="#cbeaf6"/>
<path d="M695.7 151.2 C700.3 147.9 705.9 145.3 712.4 145.1 C718.9 144.9 729.0 147.3 734.7 150.1 C740.3 152.9 743.9 156.6 746.3 161.8 C748.8 166.9 749.9 175.7 749.1 181.2 C748.3 186.8 743.6 190.9 741.6 195.1 C739.7 199.4 745.5 204.8 737.5 206.8 C729.4 208.7 701.3 211.1 693.5 206.8 C685.7 202.5 692.1 188.3 690.7 181.2 C689.4 174.2 684.3 169.5 685.2 164.5 C686.0 159.5 691.2 154.4 695.7 151.2Z" fill="#cbeaf6"/>
<path d="M712.4 78.9 C716.0 76.9 731.7 76.6 740.2 77.8 C748.8 79.0 761.0 82.8 763.9 86.1 C766.7 89.5 761.4 95.3 757.5 97.8 C753.5 100.3 746.7 102.4 740.2 101.1 C733.7 99.8 723.2 93.7 718.5 90.0 C713.9 86.3 708.8 80.9 712.4 78.9Z" fill="#cbeaf6"/>
<path d="M587.3 175.7 C589.6 173.2 598.9 173.2 601.2 175.7 C603.5 178.1 603.5 187.7 601.2 190.1 C598.9 192.5 589.6 192.5 587.3 190.1 C585.0 187.7 585.0 178.1 587.3 175.7Z" fill="#cbeaf6"/>
<path d="M779.2 200.7 C780.7 197.2 788.2 194.7 790.0 197.9 C791.8 201.1 791.6 216.7 790.0 220.1 C788.4 223.6 782.4 222.0 780.5 218.7 C778.7 215.5 777.6 204.2 779.2 200.7Z" fill="#cbeaf6"/>
<path d="M303.1 174.3 C305.5 171.9 313.3 170.8 315.7 172.9 C318.0 175.0 318.4 183.5 317.0 186.8 C315.7 190.0 309.9 192.3 307.3 192.3 C304.8 192.3 302.4 189.8 301.8 186.8 C301.1 183.8 300.8 176.6 303.1 174.3Z" fill="#cbeaf6"/>
<path d="M1008.0 109.5 C1010.7 106.1 1024.4 105.2 1030.2 105.6 C1036.0 106.0 1042.5 108.4 1042.7 111.7 C1043.0 115.0 1036.4 123.2 1031.6 125.6 C1026.8 128.0 1018.0 128.9 1014.1 126.2 C1010.2 123.5 1005.3 112.9 1008.0 109.5Z" fill="#cbeaf6"/>
<path d="M780.0 195.7 C782.8 192.8 792.4 193.4 796.7 195.1 C800.9 196.9 806.4 202.9 805.6 206.2 C804.7 209.6 795.9 214.1 791.7 215.1 C787.4 216.2 781.9 215.6 780.0 212.4 C778.1 209.1 777.2 198.5 780.0 195.7Z" fill="#cbeaf6"/>
<path d="M1030.2 179.0 C1035.5 176.6 1061.5 173.4 1067.8 175.7 C1074.0 177.9 1073.0 189.9 1067.8 192.3 C1062.5 194.7 1042.6 192.3 1036.3 190.1 C1030.1 187.9 1025.0 181.4 1030.2 179.0Z" fill="#cbeaf6"/>
<path d="M974.6 145.1 C975.9 143.5 981.7 143.1 983.0 144.5 C984.3 145.9 983.7 151.8 982.4 153.4 C981.1 155.0 976.5 155.4 975.2 154.0 C973.9 152.6 973.3 146.6 974.6 145.1Z" fill="#cbeaf6"/>
<path d="M545.6 271.7 C550.2 266.1 568.3 266.1 573.4 271.7 C578.5 277.4 580.8 300.0 576.2 305.6 C571.6 311.3 550.7 311.3 545.6 305.6 C540.5 300.0 541.0 277.4 545.6 271.7Z" fill="#cbeaf6"/>
<path d="M662.9 261.1 C666.6 256.5 675.4 257.9 684.6 257.8 C693.9 257.7 712.4 256.9 718.5 260.6 C724.7 264.3 722.3 273.6 721.3 280.0 C720.4 286.5 718.1 295.7 713.0 299.5 C707.9 303.3 694.4 295.8 690.7 302.8 C687.0 309.9 695.4 335.3 690.7 341.8 C686.1 348.3 668.0 345.1 662.9 341.8 C657.8 338.4 662.5 327.3 660.2 321.8 C657.8 316.2 650.4 312.6 649.0 308.4 C647.6 304.2 649.5 300.5 651.8 296.7 C654.1 292.9 661.1 291.5 662.9 285.6 C664.8 279.7 659.3 265.8 662.9 261.1Z" fill="#cbeaf6"/>
<path d="M745.8 286.2 C746.7 281.1 752.7 280.2 754.7 282.8 C756.6 285.4 751.6 298.0 757.5 301.7 C763.4 305.4 784.6 301.7 790.0 305.1 C795.4 308.4 793.7 318.4 790.0 321.8 C786.3 325.1 774.8 326.5 768.0 325.1 C761.2 323.7 752.8 319.9 749.1 313.4 C745.4 306.9 744.9 291.3 745.8 286.2Z" fill="#cbeaf6"/>
<path d="M961.3 232.2 C964.5 227.0 976.6 228.0 980.7 232.2 C984.9 236.5 982.7 253.1 986.3 257.8 C989.9 262.5 998.3 257.8 1002.4 260.6 C1006.6 263.4 1010.3 269.3 1011.3 274.5 C1012.3 279.7 1011.8 287.1 1008.5 291.7 C1005.3 296.4 997.5 300.0 991.9 302.3 C986.2 304.6 979.3 306.5 974.6 305.6 C970.0 304.8 966.3 304.3 964.1 297.3 C961.8 290.2 961.7 274.2 961.3 263.4 C960.8 252.5 958.0 237.4 961.3 232.2Z" fill="#cbeaf6"/>
<path d="M780.0 308.4 C781.9 306.0 788.2 308.4 791.1 310.6 C794.0 312.9 798.1 318.9 797.2 321.8 C796.4 324.6 789.0 327.3 786.1 327.9 C783.2 328.4 781.0 328.3 780.0 325.1 C779.0 321.8 778.1 310.8 780.0 308.4Z" fill="#cbeaf6"/>
<path d="M380.2 318.4 C384.7 315.9 399.8 313.1 404.6 314.0 C409.4 314.8 409.5 319.2 409.1 323.4 C408.6 327.6 406.2 335.9 401.8 339.0 C397.5 342.0 387.0 343.4 382.9 341.8 C378.9 340.1 377.8 332.9 377.4 329.0 C376.9 325.1 375.6 320.9 380.2 318.4Z" fill="#cbeaf6"/>
<path d="M329.6 289.8 C331.4 288.2 338.8 288.2 340.7 289.8 C342.5 291.4 342.5 297.9 340.7 299.5 C338.8 301.1 331.4 301.1 329.6 299.5 C327.7 297.9 327.7 291.4 329.6 289.8Z" fill="#cbeaf6"/>
<path d="M424.1 373.4 C426.2 371.5 435.4 370.6 438.0 372.0 C440.5 373.4 441.5 379.9 439.4 381.7 C437.3 383.6 428.0 384.5 425.5 383.1 C422.9 381.7 422.0 375.2 424.1 373.4Z" fill="#cbeaf6"/>
<path d="M490.0 410.9 C494.4 408.1 512.0 407.4 516.4 409.5 C520.8 411.6 520.8 420.6 516.4 423.4 C512.0 426.2 494.4 428.3 490.0 426.2 C485.6 424.1 485.6 413.7 490.0 410.9Z" fill="#cbeaf6"/>
<path d="M835.6 370.6 C840.0 367.8 858.5 366.9 863.4 369.2 C868.3 371.5 869.2 381.7 864.8 384.5 C860.4 387.3 841.9 388.2 837.0 385.9 C832.1 383.6 831.2 373.4 835.6 370.6Z" fill="#e8eff5"/>
<path d="M215.6 440.1 C168.3 438.7 221.6 435.1 226.7 431.8 C231.8 428.4 239.7 423.6 246.1 420.1 C252.6 416.6 258.7 413.4 265.6 410.6 C272.6 407.8 281.1 405.2 287.8 403.4 C294.6 401.6 298.5 400.2 305.9 400.1 C313.3 399.9 325.2 401.1 332.3 402.3 C339.5 403.5 343.5 405.2 349.0 407.3 C354.6 409.3 360.1 412.8 365.7 414.5 C371.3 416.3 375.9 417.5 382.4 417.8 C388.9 418.2 396.3 417.4 404.6 416.5 C413.0 415.5 423.2 413.4 432.4 412.3 C441.7 411.2 447.3 410.2 460.2 410.1 C473.2 410.0 501.7 406.7 510.0 411.7 C518.3 416.7 559.1 435.4 510.0 440.1 C460.9 444.8 262.8 441.5 215.6 440.1Z" fill="#afd0f8"/>
<path d="M243.4 440.1 C224.8 438.9 251.7 435.6 257.3 433.1 C262.8 430.7 270.7 427.6 276.7 425.6 C282.8 423.6 286.9 422.3 293.4 421.2 C299.9 420.1 309.2 418.8 315.7 419.0 C322.1 419.1 325.8 420.4 332.3 422.3 C338.8 424.2 348.6 427.7 354.6 430.6 C360.6 433.6 387.0 438.5 368.5 440.1 C349.9 441.7 261.9 441.3 243.4 440.1Z" fill="#f6f4ef"/>
<path d="M376.8 422.3 L404.6 420.6 L432.4 416.7 L488.0 415.6 L510.0 417.8 L510.0 440.1 L376.8 440.1Z" fill="#b0e8d0"/>
<path d="M490.0 411.7 C494.6 406.7 508.5 409.9 517.8 410.1 C527.1 410.3 538.7 411.1 545.6 412.8 C552.6 414.6 556.6 416.1 559.5 420.6 C562.4 425.2 574.4 436.8 562.8 440.1 C551.3 443.3 502.1 444.8 490.0 440.1 C477.9 435.4 485.4 416.7 490.0 411.7Z" fill="#b0e8d0"/>
<path d="M559.5 412.8 C566.5 409.2 588.7 415.6 601.2 418.4 C613.7 421.2 626.9 425.9 634.6 429.5 C642.2 433.1 659.6 438.3 647.1 440.1 C634.6 441.9 574.1 444.6 559.5 440.1 C544.9 435.6 552.6 416.5 559.5 412.8Z" fill="#afd0f8"/>
<path d="M567.8 423.4 C574.3 421.5 595.7 426.1 606.8 428.4 C617.9 430.7 629.0 435.4 634.6 437.3 C640.1 439.3 651.3 439.6 640.1 440.1 C629.0 440.6 579.9 442.9 567.8 440.1 C555.8 437.3 561.4 425.4 567.8 423.4Z" fill="#9fc4f3"/>
<path d="M737.5 440.1 C731.9 439.2 750.0 436.0 756.9 434.5 C763.9 433.0 773.6 432.0 779.2 431.2 C784.7 430.4 788.2 428.0 790.0 429.5 C791.8 431.0 798.8 438.3 790.0 440.1 C781.2 441.9 743.0 441.0 737.5 440.1Z" fill="#afd0f8"/>
<path d="M780.0 429.5 C785.6 427.1 803.2 425.8 813.4 425.6 C823.6 425.4 832.8 426.7 841.2 428.4 C849.5 430.1 858.9 434.0 863.4 435.9 C868.0 437.9 882.3 439.4 868.4 440.1 C854.5 440.8 794.7 441.9 780.0 440.1 C765.3 438.3 774.4 431.9 780.0 429.5Z" fill="#afd0f8"/>
<path d="M268.4 351.1 L293.4 349.7 L293.4 376.1 L269.8 377.5Z" fill="#eceae6"/>
<path d="M279.5 72.8 C277.2 77.9 271.2 92.2 265.6 103.4 C260.0 114.5 252.6 127.5 246.1 139.5 C239.7 151.6 232.2 165.5 226.7 175.7 C221.1 185.8 215.1 196.5 212.8 200.7" fill="none" stroke="#6685b5" stroke-width="1.4" stroke-linecap="round" stroke-linejoin="round"/>
<path d="M490.0 260.6 C503.9 260.5 548.4 260.3 573.4 260.0 C598.4 259.7 629.0 259.1 640.1 258.9" fill="none" stroke="#ffffff" stroke-width="1.5" stroke-linecap="round" stroke-linejoin="round"/>
<path d="M490.0 355.1 C503.9 355.2 545.6 354.7 573.4 355.7 C601.2 356.6 620.7 357.5 656.8 360.7 C692.9 363.8 767.8 372.3 790.0 374.6" fill="none" stroke="#ffffff" stroke-width="2" stroke-linecap="round" stroke-linejoin="round"/>
<path d="M863.4 230.0 C863.9 243.9 866.0 285.2 866.2 313.4 C866.4 341.6 865.0 384.8 864.8 399.0" fill="none" stroke="#ffffff" stroke-width="1.5" stroke-linecap="round" stroke-linejoin="round"/>
<path d="M651.3 340.0 L651.3 434.5" fill="none" stroke="#ffffff" stroke-width="1.5" stroke-linecap="round" stroke-linejoin="round"/>
<path d="M540.0 340.0 L541.4 434.5" fill="none" stroke="#fbebbd" stroke-width="2" stroke-linecap="round" stroke-linejoin="round"/>
<path d="M913.5 230.0 C915.3 233.7 920.9 245.3 924.6 252.2 C928.3 259.2 934.5 263.8 935.7 271.7 C936.9 279.6 933.4 292.6 931.5 299.5 C929.7 306.5 924.8 307.4 924.6 313.4 C924.3 319.4 929.7 328.7 930.1 335.7 C930.6 342.6 930.1 347.2 927.4 355.1 C924.6 363.0 916.2 375.6 913.5 382.9 C910.7 390.2 911.1 394.2 910.7 399.0 C910.2 403.9 909.7 405.7 910.7 412.3 C911.6 418.9 915.3 434.3 916.2 438.7" fill="none" stroke="#b9d9f5" stroke-width="1.3" stroke-linecap="round" stroke-linejoin="round"/>
<path d="M212.8 313.4 C226.2 313.3 266.1 312.9 293.4 312.9 C320.8 312.9 349.0 313.5 376.8 313.4 C404.6 313.3 438.0 312.8 460.2 312.3 C482.4 311.8 501.7 310.9 510.0 310.6" fill="none" stroke="#fbebbd" stroke-width="3.2" stroke-linecap="round" stroke-linejoin="round"/>
<path d="M212.8 348.2 C221.6 347.9 245.7 347.8 265.6 346.8 C285.5 345.7 313.8 342.5 332.3 341.8 C350.9 341.1 363.8 340.8 376.8 342.6 C389.8 344.4 404.6 350.7 410.2 352.3" fill="none" stroke="#fbebbd" stroke-width="3.2" stroke-linecap="round" stroke-linejoin="round"/>
<path d="M251.7 232.8 C251.6 241.6 251.1 266.4 251.1 285.6 C251.1 304.8 251.6 337.7 251.7 348.2" fill="none" stroke="#fbebbd" stroke-width="2.4" stroke-linecap="round" stroke-linejoin="round"/>
<path d="M221.1 232.8 L222.5 257.8" fill="none" stroke="#fbebbd" stroke-width="2" stroke-linecap="round" stroke-linejoin="round"/>
<path d="M490.0 302.8 C499.3 303.1 527.1 303.9 545.6 304.5 C564.1 305.1 586.4 307.1 601.2 306.5 C616.0 305.9 625.3 304.1 634.6 300.9 C643.8 297.7 651.7 293.7 656.8 287.0 C661.9 280.3 663.3 270.1 665.2 260.6 C667.0 251.1 667.5 235.1 667.9 230.0" fill="none" stroke="#fbebbd" stroke-width="2.8" stroke-linecap="round" stroke-linejoin="round"/>
<path d="M490.0 325.9 C498.3 324.7 525.2 320.3 540.0 318.4 C554.9 316.6 567.8 315.6 579.0 314.8 C590.1 314.0 602.1 313.6 606.8 313.4" fill="none" stroke="#fbebbd" stroke-width="2.4" stroke-linecap="round" stroke-linejoin="round"/>
<path d="M490.0 339.8 C503.9 339.6 545.6 337.7 573.4 338.4 C601.2 339.1 629.0 341.2 656.8 344.0 C684.6 346.8 718.0 352.0 740.2 355.1 C762.4 358.3 781.7 361.6 790.0 362.9" fill="none" stroke="#fbebbd" stroke-width="4" stroke-linecap="round" stroke-linejoin="round"/>
<path d="M780.0 299.0 C789.3 300.4 817.1 304.1 835.6 307.8 C854.1 311.6 872.7 318.0 891.2 321.8 C909.7 325.5 927.4 325.9 946.8 330.1 C966.3 334.3 987.8 340.3 1008.0 346.8 C1028.1 353.3 1057.8 365.3 1067.8 369.0" fill="none" stroke="#fbebbd" stroke-width="3" stroke-linecap="round" stroke-linejoin="round"/>
<path d="M508.1 230.0 C508.2 243.9 508.6 285.2 508.9 313.4 C509.2 341.6 509.8 384.8 510.0 399.0" fill="none" stroke="#fbebbd" stroke-width="3" stroke-linecap="round" stroke-linejoin="round"/>
<path d="M510.0 340.0 L510.9 434.5" fill="none" stroke="#fbebbd" stroke-width="3" stroke-linecap="round" stroke-linejoin="round"/>
<path d="M576.2 230.0 C576.3 243.9 576.8 291.2 576.7 313.4 C576.7 335.7 575.8 355.1 575.6 363.5" fill="none" stroke="#fbebbd" stroke-width="2.5" stroke-linecap="round" stroke-linejoin="round"/>
<path d="M601.2 241.1 C601.4 253.2 602.5 287.1 602.6 313.4 C602.7 339.7 601.9 384.8 601.8 399.0" fill="none" stroke="#fbebbd" stroke-width="3.5" stroke-linecap="round" stroke-linejoin="round"/>
<path d="M601.8 340.0 L602.6 434.5" fill="none" stroke="#fbebbd" stroke-width="3.5" stroke-linecap="round" stroke-linejoin="round"/>
<path d="M995.5 230.0 L996.9 246.7" fill="none" stroke="#fbebbd" stroke-width="2" stroke-linecap="round" stroke-linejoin="round"/>
<path d="M839.8 117.3 C845.1 117.0 859.9 115.2 871.8 115.9 C883.6 116.6 900.0 119.8 910.7 121.4 C921.3 123.1 931.5 124.9 935.7 125.6" fill="none" stroke="#fbebbd" stroke-width="3.5" stroke-linecap="round" stroke-linejoin="round"/>
<path d="M839.8 118.7 C840.2 124.4 842.6 142.1 842.6 153.4 C842.6 164.8 842.3 178.0 839.8 186.8 C837.2 195.6 829.4 203.0 827.3 206.2" fill="none" stroke="#fbebbd" stroke-width="3" stroke-linecap="round" stroke-linejoin="round"/>
<path d="M825.9 207.6 C825.2 210.6 822.9 220.5 821.7 225.7 C820.5 230.9 819.6 235.5 818.9 239.0 C818.2 242.5 818.6 241.2 817.5 246.7 C816.5 252.1 814.2 262.9 812.8 271.7 C811.4 280.5 810.0 287.9 809.2 299.5 C808.4 311.1 808.4 328.7 807.8 341.2 C807.2 353.7 806.3 364.9 805.6 374.6 C804.9 384.2 804.1 388.4 803.6 399.0 C803.2 409.7 802.9 432.1 802.8 438.7" fill="none" stroke="#fbd666" stroke-width="4.4" stroke-linecap="round" stroke-linejoin="round"/>
<path d="M995.5 133.9 C995.9 138.6 999.0 153.4 998.3 161.8 C997.6 170.1 995.2 177.5 991.3 184.0 C987.4 190.5 979.3 193.7 974.6 200.7 C970.0 207.6 965.8 219.3 963.5 225.7 C961.2 232.1 961.2 236.8 960.7 239.0" fill="none" stroke="#fbebbd" stroke-width="3" stroke-linecap="round" stroke-linejoin="round"/>
<path d="M957.9 196.5 C960.7 199.5 972.3 207.5 974.6 214.6 C976.9 221.7 972.3 235.0 971.8 239.0" fill="none" stroke="#fbebbd" stroke-width="2.5" stroke-linecap="round" stroke-linejoin="round"/>
<path d="M537.3 75.6 C537.7 81.6 537.3 101.5 540.0 111.7 C542.8 121.9 549.3 128.4 553.9 136.7 C558.6 145.1 565.3 152.9 567.8 161.8 C570.4 170.6 569.7 178.9 569.2 189.6 C568.8 200.2 565.8 219.7 565.1 225.7" fill="none" stroke="#fbebbd" stroke-width="2.2" stroke-linecap="round" stroke-linejoin="round"/>
<path d="M595.7 75.6 C595.2 79.3 596.6 89.9 592.9 97.8 C589.2 105.7 578.0 115.4 573.4 122.8 C568.8 130.2 566.5 139.0 565.1 142.3" fill="none" stroke="#fbebbd" stroke-width="2.2" stroke-linecap="round" stroke-linejoin="round"/>
<path d="M645.7 114.5 C649.4 119.1 661.5 133.9 667.9 142.3 C674.4 150.6 680.9 156.2 684.6 164.5 C688.3 172.9 690.2 184.0 690.2 192.3 C690.2 200.7 688.3 207.6 684.6 214.6 C680.9 221.5 670.7 230.8 667.9 234.0" fill="none" stroke="#f3d9b0" stroke-width="1.6" stroke-linecap="round" stroke-linejoin="round"/>
<path d="M807.8 340.0 C817.1 340.9 844.9 343.7 863.4 345.6 C881.9 347.4 902.3 347.4 919.0 351.1 C935.7 354.8 949.6 363.6 963.5 367.8 C977.4 372.0 991.3 372.4 1002.4 376.1 C1013.5 379.9 1021.0 384.0 1030.2 390.0 C1039.5 396.1 1051.8 406.7 1058.0 412.3 C1064.3 417.8 1066.1 421.6 1067.8 423.4" fill="none" stroke="#fbebbd" stroke-width="2.6" stroke-linecap="round" stroke-linejoin="round"/>
<path d="M935.7 356.7 C937.6 359.9 943.1 371.5 946.8 376.1 C950.5 380.8 956.1 383.1 957.9 384.5" fill="none" stroke="#fbebbd" stroke-width="2.5" stroke-linecap="round" stroke-linejoin="round"/>
<path d="M930.1 280.0 C926.9 282.4 917.2 290.7 910.7 293.9 C904.2 297.2 894.5 298.6 891.2 299.5" fill="none" stroke="#fbebbd" stroke-width="3" stroke-linecap="round" stroke-linejoin="round"/>
<path d="M244.0 104.0 C243.7 107.5 242.8 118.0 242.0 125.0 C241.2 132.0 240.0 140.5 239.0 146.0 C238.0 151.5 236.5 156.0 236.0 158.0" fill="none" stroke="#f9bb8c" stroke-width="4.4" stroke-linecap="round" stroke-linejoin="round"/>
<path d="M213.0 143.0 C215.0 144.2 220.8 147.5 225.0 150.0 C229.2 152.5 235.8 156.7 238.0 158.0" fill="none" stroke="#fbb07a" stroke-width="4" stroke-linecap="round" stroke-linejoin="round"/>
<path d="M254.5 167.3 C254.0 172.9 252.6 192.3 251.7 200.7 C250.8 209.0 249.4 214.6 248.9 217.4" fill="none" stroke="#f7c9a0" stroke-width="2.2" stroke-linecap="round" stroke-linejoin="round"/>
<path d="M324.0 78.3 C322.6 82.0 319.4 91.8 315.7 100.6 C311.9 109.4 305.9 120.5 301.8 131.2 C297.6 141.8 292.5 159.0 290.6 164.5" fill="none" stroke="#fbebbd" stroke-width="2.2" stroke-linecap="round" stroke-linejoin="round"/>
<path d="M330.0 254.0 C333.1 253.1 339.6 249.7 348.6 248.5 C357.6 247.3 373.5 248.2 384.0 246.6 C394.5 245.0 403.5 242.9 411.8 239.2 C420.1 235.5 428.4 229.0 434.0 224.3 C439.6 219.7 442.4 215.3 445.2 211.3 C448.0 207.3 448.3 203.8 450.8 200.2 C453.3 196.6 455.4 192.2 460.0 189.5 C464.6 186.8 472.5 183.8 478.7 184.0 C484.9 184.2 492.4 188.5 497.3 190.9 C502.2 193.3 502.9 196.8 508.4 198.3 C513.9 199.9 526.4 199.9 530.0 200.2" fill="none" stroke="#fbd666" stroke-width="5.4" stroke-linecap="round" stroke-linejoin="round"/>
<path d="M441.5 218.8 C444.0 219.7 452.7 221.8 456.4 224.3 C460.1 226.8 461.9 229.9 463.8 233.6 C465.7 237.3 466.2 241.8 467.5 246.7 C468.8 251.6 470.7 260.3 471.3 263.0" fill="none" stroke="#fbd666" stroke-width="3.6" stroke-linecap="round" stroke-linejoin="round"/>
<path d="M212.8 225.7 C216.0 226.4 225.8 228.0 232.2 229.9 C238.7 231.7 246.1 234.5 251.7 236.8 C257.3 239.1 263.3 242.6 265.6 243.8" fill="none" stroke="#fbd666" stroke-width="4" stroke-linecap="round" stroke-linejoin="round"/>
<path d="M251.7 200.7 C250.3 203.0 247.5 210.4 243.4 214.6 C239.2 218.7 231.8 223.4 226.7 225.7 C221.6 228.0 215.1 228.0 212.8 228.5" fill="none" stroke="#f8c89a" stroke-width="3" stroke-linecap="round" stroke-linejoin="round"/>
<path d="M307.5 268.0 C309.6 267.0 316.2 264.3 320.0 262.0 C323.8 259.7 328.3 255.3 330.0 254.0" fill="none" stroke="#fbd666" stroke-width="5" stroke-linecap="round" stroke-linejoin="round"/>
<path d="M307.3 268.1 C301.8 266.4 283.2 261.8 273.9 257.8 C264.7 253.8 259.6 248.5 251.7 243.9 C243.8 239.3 230.9 232.3 226.7 230.0" fill="none" stroke="#fbd666" stroke-width="2.4" stroke-linecap="round" stroke-linejoin="round"/>
<path d="M350.4 250.9 C349.2 253.4 348.1 261.3 343.5 266.1 C338.8 271.0 326.8 275.4 322.6 280.0 C318.4 284.7 318.2 289.2 318.4 293.9 C318.7 298.7 322.1 303.7 324.0 308.4 C325.8 313.1 328.3 317.1 329.6 322.3 C330.9 327.5 331.4 336.9 331.8 339.8" fill="none" stroke="#fbd666" stroke-width="5.2" stroke-linecap="round" stroke-linejoin="round"/>
<path d="M510.0 320.4 C506.3 321.5 493.5 325.1 488.0 327.3 C482.5 329.5 478.8 332.4 476.9 333.4" fill="none" stroke="#fbe3a4" stroke-width="3.6" stroke-linecap="round" stroke-linejoin="round"/>
<path d="M478.3 335.1 C475.3 336.2 467.9 339.3 460.2 341.8 C452.6 344.3 441.7 347.3 432.4 350.1 C423.2 352.9 413.9 354.3 404.6 358.5 C395.4 362.6 385.2 369.8 376.8 375.1 C368.5 380.5 360.2 385.9 354.6 390.4 C348.9 395.0 344.8 400.4 342.9 402.4" fill="none" stroke="#fbd666" stroke-width="6.4" stroke-linecap="round" stroke-linejoin="round"/>
<path d="M458.8 230.0 C460.9 232.8 468.3 239.7 471.4 246.7 C474.4 253.6 475.7 262.9 476.9 271.7 C478.1 280.5 478.6 292.1 478.6 299.5 C478.6 306.9 477.2 313.4 476.9 316.2" fill="none" stroke="#fbd666" stroke-width="3.2" stroke-linecap="round" stroke-linejoin="round"/>
<path d="M330.1 340.0 C330.5 343.7 330.6 356.2 332.3 362.2 C334.1 368.3 339.2 371.0 340.7 376.1 C342.2 381.2 342.1 386.8 341.2 392.8 C340.4 398.9 338.1 405.1 335.7 412.3 C333.3 419.5 328.3 432.0 326.8 435.9" fill="none" stroke="#fbd666" stroke-width="5.5" stroke-linecap="round" stroke-linejoin="round"/>
<path d="M417.1 347.8 C412.7 350.2 399.3 357.1 390.7 362.2 C382.2 367.4 373.1 373.4 365.7 378.9 C358.3 384.5 350.4 392.0 346.2 395.6 C342.1 399.2 341.6 399.8 340.7 400.6" fill="none" stroke="#fbd666" stroke-width="6.4" stroke-linecap="round" stroke-linejoin="round"/>
<path d="M490.0 189.6 C493.7 190.3 504.8 192.7 512.2 193.7 C519.7 194.7 526.6 194.4 534.5 195.7 C542.4 196.9 551.6 198.5 559.5 201.2 C567.4 204.0 574.8 208.3 581.8 212.4 C588.7 216.4 594.3 222.0 601.2 225.7 C608.2 229.4 622.1 233.9 623.5 234.6 C624.8 235.3 608.6 229.4 609.6 230.0 C610.5 230.6 621.1 236.0 629.0 238.3 C636.9 240.7 647.6 242.5 656.8 243.9 C666.1 245.3 675.4 246.4 684.6 246.7 C693.9 247.0 704.6 245.9 712.4 245.6 C720.3 245.2 724.9 243.3 731.9 244.5 C738.8 245.6 744.4 248.2 754.1 252.2 C763.8 256.3 781.1 264.8 790.0 268.9 C798.9 273.1 800.2 274.0 807.8 277.3 C815.4 280.5 826.3 285.1 835.6 288.4 C844.9 291.6 854.1 294.3 863.4 296.7 C872.7 299.1 881.9 300.9 891.2 302.8 C900.5 304.8 909.7 306.6 919.0 308.4 C928.3 310.3 937.6 311.6 946.8 314.0 C956.1 316.3 965.4 319.3 974.6 322.3 C983.9 325.3 993.2 328.6 1002.4 331.8 C1011.7 334.9 1021.0 338.5 1030.2 341.2 C1039.5 343.9 1051.8 346.7 1058.0 348.2 C1064.3 349.6 1066.1 349.8 1067.8 350.1" fill="none" stroke="#fbd666" stroke-width="6.6" stroke-linecap="round" stroke-linejoin="round"/>
<path d="M506.7 200.7 C511.3 201.0 525.7 201.5 534.5 202.9 C543.3 204.3 551.6 206.1 559.5 209.0 C567.4 211.9 574.8 216.2 581.8 220.1 C588.7 224.1 598.0 230.1 601.2 232.7 C604.5 235.2 596.6 233.6 601.2 235.6 C605.8 237.5 619.7 242.0 629.0 244.5 C638.3 246.9 652.2 249.1 656.8 250.0" fill="none" stroke="#d9d9d9" stroke-width="1.6" stroke-linecap="round" stroke-linejoin="round" stroke-dasharray="4 3"/>
<path d="M740.2 252.2 C748.5 256.2 778.7 270.5 790.0 275.9 C801.3 281.2 800.2 281.0 807.8 284.2 C815.4 287.5 826.3 292.2 835.6 295.3 C844.9 298.4 854.1 300.5 863.4 302.8 C872.7 305.2 881.9 307.2 891.2 309.2 C900.5 311.2 909.7 312.9 919.0 314.8 C928.3 316.7 937.6 318.0 946.8 320.4 C956.1 322.7 965.4 325.8 974.6 328.7 C983.9 331.6 993.2 334.9 1002.4 337.9 C1011.7 340.9 1022.8 344.5 1030.2 346.8 C1037.6 349.1 1044.1 350.9 1046.9 351.8" fill="none" stroke="#bdbdbd" stroke-width="1.8" stroke-linecap="round" stroke-linejoin="round" stroke-dasharray="5 4"/>
<path d="M363.5 257.0 C368.8 256.5 383.9 258.2 395.0 254.0 C406.1 249.8 424.5 235.5 430.4 231.8" fill="none" stroke="#c4c4c4" stroke-width="1.3" stroke-linecap="round" stroke-linejoin="round" stroke-dasharray="4 3"/>
<path d="M452.7 204.0 C455.8 202.4 463.6 195.6 471.0 194.6 C478.4 193.6 487.2 195.9 497.0 198.0 C506.8 200.1 524.5 205.5 530.0 207.0" fill="none" stroke="#c4c4c4" stroke-width="1.3" stroke-linecap="round" stroke-linejoin="round" stroke-dasharray="4 3"/>
<path d="M212.8 155.6 C217.0 156.4 229.0 158.6 237.8 160.4 C246.6 162.1 256.3 164.8 265.6 166.2 C274.9 167.6 284.1 169.0 293.4 169.0 C302.7 169.0 312.9 167.1 321.2 166.2 C329.6 165.3 334.2 163.3 343.5 163.4 C352.7 163.6 366.6 166.4 376.8 167.0 C387.0 167.6 393.0 167.6 404.6 167.0 C416.2 166.4 434.7 164.8 446.3 163.4 C457.9 162.1 463.5 161.3 474.1 159.0 C484.7 156.7 501.3 152.2 510.0 149.5 C518.7 146.8 518.8 144.5 526.1 142.8 C533.5 141.2 546.5 140.6 553.9 139.5 C561.4 138.4 563.7 138.9 570.6 136.2 C577.6 133.5 588.2 126.9 595.7 123.4 C603.1 119.9 608.6 117.0 615.1 115.0 C621.6 113.1 629.5 112.2 634.6 111.7 C639.7 111.2 640.1 110.6 645.7 112.3 C651.3 113.9 660.5 118.3 667.9 121.7 C675.4 125.1 682.8 129.6 690.2 132.8 C697.6 136.1 705.0 139.1 712.4 141.2 C719.8 143.2 728.2 144.1 734.7 145.1 C741.2 146.0 745.8 145.7 751.4 146.7 C756.9 147.8 761.6 148.6 768.0 151.2 C774.5 153.8 785.2 157.7 790.0 162.3 C794.8 166.9 793.3 173.9 796.7 179.0 C800.1 184.1 805.9 188.7 810.6 192.9 C815.2 197.1 820.3 201.5 824.5 204.0 C828.7 206.5 829.1 207.2 835.6 207.9 C842.1 208.6 851.8 208.4 863.4 208.2 C875.0 208.0 893.1 207.8 905.1 206.8 C917.2 205.8 926.9 204.0 935.7 202.3 C944.5 200.7 948.7 199.7 957.9 196.8 C967.2 193.8 980.2 188.3 991.3 184.6 C1002.4 180.8 1011.9 177.0 1024.7 174.5 C1037.4 172.1 1060.6 170.8 1067.8 170.1" fill="none" stroke="#fbb07a" stroke-width="6" stroke-linecap="round" stroke-linejoin="round"/>
<path d="M790.0 74.2 C786.3 77.2 773.5 86.0 768.0 92.2 C762.5 98.5 759.6 104.8 756.9 111.7 C754.2 118.7 752.8 128.1 751.9 133.9 C751.0 139.8 751.9 142.1 751.4 146.7 C750.8 151.4 749.5 155.1 748.6 161.8 C747.6 168.4 747.2 178.9 745.8 186.8 C744.4 194.7 742.5 200.7 740.2 209.0 C738.0 217.4 734.2 231.0 732.4 236.8 C730.7 242.6 731.1 238.6 729.7 243.9 C728.3 249.3 727.0 262.0 724.1 268.9 C721.2 275.9 717.1 280.5 712.4 285.6 C707.8 290.7 700.2 294.9 696.3 299.5 C692.4 304.1 690.3 306.5 689.1 313.4 C687.8 320.4 688.4 331.9 688.8 341.2 C689.2 350.5 690.9 359.7 691.6 369.0 C692.3 378.3 692.8 397.0 693.0 396.8 C693.1 396.6 692.6 368.0 692.4 367.8 C692.2 367.6 692.1 384.3 691.9 395.6 C691.6 407.0 690.9 429.2 690.7 435.9" fill="none" stroke="#fbb07a" stroke-width="5" stroke-linecap="round" stroke-linejoin="round"/>
<path d="M919.0 208.2 C921.0 209.3 927.0 211.7 930.7 215.1 C934.4 218.6 938.9 223.8 941.3 229.0 C943.6 234.3 943.1 239.6 944.6 246.7 C946.1 253.8 948.6 262.9 950.2 271.7 C951.7 280.5 952.8 290.2 954.1 299.5 C955.3 308.8 956.8 318.0 957.9 327.3 C959.1 336.6 960.2 346.3 960.7 355.1 C961.3 363.9 961.2 379.9 961.3 380.1 C961.4 380.4 961.1 357.3 961.3 356.7 C961.5 356.0 962.9 369.7 962.4 376.1 C961.8 382.6 960.0 389.1 957.9 395.6 C955.9 402.1 952.9 408.4 950.2 415.1 C947.4 421.8 942.7 432.4 941.3 435.9" fill="none" stroke="#fbb07a" stroke-width="5" stroke-linecap="round" stroke-linejoin="round"/>
<path d="M570.6 136.2 C569.7 139.0 565.5 145.9 565.1 153.4 C564.6 160.9 567.4 176.6 567.8 181.2" fill="none" stroke="#f9cf9e" stroke-width="2.2" stroke-linecap="round" stroke-linejoin="round"/>
<path d="M780.0 85.3 L791.1 72.8" fill="none" stroke="#fbb07a" stroke-width="4.5" stroke-linecap="round" stroke-linejoin="round"/>
<path d="M544.2 299.5 C544.4 303.2 545.3 314.8 545.1 321.8 C544.8 328.7 543.2 338.0 542.8 341.2" fill="none" stroke="#f4b77a" stroke-width="2" stroke-linecap="round" stroke-linejoin="round"/>
<path d="M490.0 324.5 C494.2 323.7 506.0 321.4 515.0 319.5 C524.1 317.7 539.4 314.4 544.2 313.4" fill="none" stroke="#f9d3a6" stroke-width="2.2" stroke-linecap="round" stroke-linejoin="round"/>
<path d="M490.0 208.2 C492.8 206.9 502.0 204.2 506.7 200.7 C511.3 197.1 514.6 191.3 517.8 186.8 C521.0 182.2 521.5 176.6 526.1 173.4 C530.8 170.3 536.3 169.3 545.6 167.9 C554.9 166.5 573.8 168.9 581.8 165.1 C589.7 161.3 587.9 150.6 593.4 145.1 C599.0 139.5 609.2 136.3 615.1 131.7 C621.0 127.2 623.9 121.5 629.0 117.8 C634.1 114.1 640.5 111.9 645.7 109.5 C650.9 107.1 656.5 107.1 660.2 103.4 C663.9 99.7 665.6 92.2 667.9 87.2 C670.3 82.2 673.0 75.7 674.1 73.3" fill="none" stroke="#6d5473" stroke-width="1.3" stroke-linecap="round" stroke-linejoin="round"/>
<path d="M490.0 208.0 C488.8 209.0 485.0 211.7 483.0 214.0 C481.0 216.3 479.5 219.3 478.0 222.0 C476.5 224.7 474.7 228.7 474.0 230.0" fill="none" stroke="#6d5473" stroke-width="1.2" stroke-linecap="round" stroke-linejoin="round"/>
<path d="M948.2 124.5 C953.5 125.0 969.8 126.3 980.2 127.3 C990.6 128.2 996.2 128.4 1010.8 130.1 C1025.4 131.7 1058.3 136.1 1067.8 137.3" fill="none" stroke="#5c6068" stroke-width="1.3" stroke-linecap="round" stroke-linejoin="round"/>
<path d="M942.7 125.6 C942.7 131.2 941.7 149.7 942.9 159.0 C944.2 168.2 947.7 171.9 950.2 181.2 C952.7 190.5 956.2 205.3 957.9 214.6 C959.7 223.8 960.4 229.6 960.7 236.8 C961.1 244.0 960.1 247.4 960.2 257.8 C960.2 268.3 960.9 288.4 961.0 299.5 C961.1 310.6 961.2 319.6 960.7 324.5 C960.2 329.5 962.1 328.3 957.9 329.3 C953.8 330.2 946.8 331.5 935.7 330.1 C924.6 328.7 907.9 323.8 891.2 320.6 C874.5 317.5 849.5 313.2 835.6 311.2 C821.7 309.2 817.1 309.2 807.8 308.7 C798.5 308.2 784.6 308.2 780.0 308.1" fill="none" stroke="#5c6068" stroke-width="1.3" stroke-linecap="round" stroke-linejoin="round"/>
<path d="M960.7 325.9 C960.9 329.6 961.8 344.1 961.6 348.2 C961.3 352.2 963.6 350.0 959.3 350.4 C955.0 350.8 946.8 350.3 935.7 350.4 C924.6 350.5 901.0 349.5 892.6 351.2 C884.2 352.9 887.2 355.1 885.1 360.7 C883.0 366.2 882.2 374.5 880.1 384.5 C878.0 394.5 874.3 411.6 872.3 420.6 C870.3 429.7 868.6 435.7 867.9 438.7" fill="none" stroke="#4d9a68" stroke-width="1.3" stroke-linecap="round" stroke-linejoin="round"/>
<path d="M226.7 238.3 C233.2 240.7 253.1 247.1 265.6 252.2 C278.1 257.3 290.6 265.4 301.8 268.9 C312.9 272.4 323.5 271.5 332.3 273.4 C341.1 275.2 346.7 277.3 354.6 280.0 C362.5 282.8 369.4 287.0 379.6 290.1 C389.8 293.1 399.5 297.0 415.7 298.4 C432.0 299.8 465.8 297.3 476.9 298.4 C488.0 299.5 482.4 301.6 482.5 305.1 C482.6 308.5 479.0 313.9 477.5 319.0 C475.9 324.1 473.1 330.1 473.0 335.7 C472.9 341.2 474.4 346.8 476.9 352.3 C479.4 357.9 483.4 364.8 488.0 369.0 C492.7 373.2 495.1 375.2 504.7 377.4 C514.3 379.5 529.5 380.1 545.6 381.8 C561.7 383.5 584.5 385.8 601.2 387.4 C617.9 388.9 630.9 389.5 645.7 391.0 C660.5 392.5 679.1 395.2 690.2 396.3 C701.3 397.3 701.8 396.6 712.4 397.3 C723.1 397.9 744.9 400.3 754.1 400.1 C763.4 399.8 762.1 398.2 768.0 395.6 C774.0 393.0 785.7 387.0 790.0 384.5 C794.3 382.0 790.9 381.5 793.9 380.6 C796.9 379.7 800.9 378.0 807.8 378.9 C814.8 379.9 826.3 383.6 835.6 386.2 C844.9 388.7 854.1 391.3 863.4 394.5 C872.7 397.7 882.9 401.3 891.2 405.6 C899.6 410.0 906.0 416.0 913.5 420.6 C920.9 425.3 930.1 430.4 935.7 433.4 C941.3 436.4 945.0 437.8 946.8 438.7" fill="none" stroke="#d9606a" stroke-width="1.2" stroke-linecap="round" stroke-linejoin="round"/>
<path d="M474.1 230.0 C471.8 232.3 467.2 237.9 460.2 243.9 C453.3 249.9 439.3 259.2 432.4 266.1 C425.6 273.1 420.5 276.8 419.1 285.6 C417.7 294.4 422.8 312.0 424.1 319.0 C425.4 325.9 428.2 322.2 426.9 327.3 C425.6 332.4 419.0 341.7 416.3 349.6 C413.6 357.4 412.6 366.3 410.7 374.6 C408.9 382.8 405.5 398.8 405.2 399.0 C404.9 399.3 409.1 377.2 409.1 376.1 C409.1 375.1 406.8 388.8 405.2 392.8 C403.6 396.8 402.0 398.4 399.6 400.1 C397.2 401.7 394.5 403.5 390.7 402.8 C386.9 402.2 381.9 398.2 376.8 396.2 C371.7 394.1 366.6 392.0 360.1 390.6 C353.7 389.2 345.3 388.7 337.9 387.8 C330.5 386.9 322.1 386.4 315.7 385.0 C309.2 383.7 304.1 379.7 299.0 379.5 C293.9 379.3 289.2 382.5 285.1 383.9 C280.9 385.3 277.2 385.8 273.9 387.8 C270.7 389.9 270.2 392.9 265.6 396.2 C261.0 399.4 253.1 404.0 246.1 407.3 C239.2 410.5 229.5 412.8 223.9 415.6 C218.3 418.4 214.6 422.6 212.8 424.0" fill="none" stroke="#6d5473" stroke-width="1.2" stroke-linecap="round" stroke-linejoin="round"/>
<path d="M226.7 243.9 C228.5 246.2 233.6 251.8 237.8 257.8 C242.0 263.8 248.5 273.1 251.7 280.0 C254.9 287.0 256.1 289.3 257.3 299.5 C258.5 309.7 258.2 329.6 258.9 341.2 C259.7 352.8 260.6 359.4 261.7 369.0 C262.8 378.7 263.1 390.8 265.6 399.0 C268.1 407.3 273.4 411.8 276.7 418.4 C280.1 425.0 284.1 435.3 285.6 438.7" fill="none" stroke="#5b8cc4" stroke-width="1.2" stroke-linecap="round" stroke-linejoin="round"/>
<path d="M553.9 230.0 C554.0 243.9 554.2 285.2 554.5 313.4 C554.8 341.6 555.2 378.6 555.6 399.0 C556.0 419.5 556.5 429.8 556.7 435.9" fill="none" stroke="#78b5e6" stroke-width="1.2" stroke-linecap="round" stroke-linejoin="round"/>
<path d="M575.1 339.8 C575.0 349.7 575.1 387.4 574.8 399.0 C574.5 410.7 571.8 405.8 573.4 409.5 C575.0 413.2 576.2 417.8 584.5 421.2 C592.9 424.5 613.6 426.6 623.5 429.5 C633.3 432.4 640.1 437.2 643.5 438.7" fill="none" stroke="#3f62a8" stroke-width="1.3" stroke-linecap="round" stroke-linejoin="round"/>
<path d="M743.0 308.4 C743.3 313.9 743.9 331.1 744.7 341.2 C745.4 351.3 746.5 359.4 747.5 369.0 C748.4 378.7 750.1 387.9 750.2 399.0 C750.4 410.2 748.9 429.8 748.6 435.9" fill="none" stroke="#5c6068" stroke-width="1.3" stroke-linecap="round" stroke-linejoin="round"/>
<path d="M738.8 308.4 C741.9 307.9 748.4 306.2 756.9 305.6 C765.4 305.1 784.5 305.2 790.0 305.1" fill="none" stroke="#5c6068" stroke-width="1.2" stroke-linecap="round" stroke-linejoin="round"/>
<g><path d="M271.0 99.6 L273.4 103.2 L275.8 99.6Z" fill="#9a6ae8"/><circle cx="273.4" cy="95.5" r="5.5" fill="#9a6ae8"/><g transform="translate(273.4 95.5) scale(1.20) translate(-273.4 -95.5)"><path d="M271.2 93.9 H275.6 V97.5 Q273.4 98.5 271.2 97.5Z" fill="#fff"/><path d="M272.4 95.1 Q273.4 96.5 274.4 95.1" fill="none" stroke="#9a6ae8" stroke-width="0.7"/></g></g>
<text x="298.0" y="99.6" font-size="8.3" font-weight="500" fill="#6a6a6a" text-anchor="middle" font-family="Liberation Sans,Noto Sans CJK SC,sans-serif" stroke="#ffffff" stroke-width="1.6" stroke-opacity="0.75" paint-order="stroke" stroke-linejoin="round">万达广场</text>
<text x="306.8" y="135.6" font-size="8" font-weight="500" fill="#777" text-anchor="middle" font-family="Liberation Sans,Noto Sans CJK SC,sans-serif" transform="rotate(22 306.8 132.7)" stroke="#ffffff" stroke-width="1.6" stroke-opacity="0.75" paint-order="stroke" stroke-linejoin="round">白</text>
<text x="303.0" y="144.5" font-size="8" font-weight="500" fill="#777" text-anchor="middle" font-family="Liberation Sans,Noto Sans CJK SC,sans-serif" transform="rotate(22 303.0 141.6)" stroke="#ffffff" stroke-width="1.6" stroke-opacity="0.75" paint-order="stroke" stroke-linejoin="round">云</text>
<text x="299.2" y="153.4" font-size="8" font-weight="500" fill="#777" text-anchor="middle" font-family="Liberation Sans,Noto Sans CJK SC,sans-serif" transform="rotate(22 299.2 150.5)" stroke="#ffffff" stroke-width="1.6" stroke-opacity="0.75" paint-order="stroke" stroke-linejoin="round">大</text>
<text x="295.4" y="162.3" font-size="8" font-weight="500" fill="#777" text-anchor="middle" font-family="Liberation Sans,Noto Sans CJK SC,sans-serif" transform="rotate(22 295.4 159.4)" stroke="#ffffff" stroke-width="1.6" stroke-opacity="0.75" paint-order="stroke" stroke-linejoin="round">道</text>
<text x="436.6" y="172.1" font-size="8.8" font-weight="500" fill="#333" text-anchor="middle" font-family="Liberation Sans,Noto Sans CJK SC,sans-serif" transform="rotate(-2 436.6 168.9)" stroke="#ffffff" stroke-width="1.6" stroke-opacity="0.75" paint-order="stroke" stroke-linejoin="round">广州环城高速</text>
<g><path d="M454.5 144.1 L456.9 147.7 L459.3 144.1Z" fill="#f2a23e"/><circle cx="456.9" cy="140.0" r="5.5" fill="#f2a23e"/><g transform="translate(456.9 140.0) scale(1.20) translate(-456.9 -140.0)"><path d="M454.3 139.6 L456.9 137.4 L459.5 139.6Z" fill="#fff"/><rect x="454.9" y="140.0" width="4" height="2.4" fill="#fff"/></g></g>
<text x="484.0" y="144.9" font-size="8.3" font-weight="500" fill="#6a6a6a" text-anchor="middle" font-family="Liberation Sans,Noto Sans CJK SC,sans-serif" stroke="#ffffff" stroke-width="1.6" stroke-opacity="0.75" paint-order="stroke" stroke-linejoin="round">蹦极弹床</text>
<g><path d="M463.4 83.1 L465.8 86.7 L468.2 83.1Z" fill="#f2a23e"/><circle cx="465.8" cy="79.0" r="5.5" fill="#f2a23e"/><g transform="translate(465.8 79.0) scale(1.20) translate(-465.8 -79.0)"><path d="M463.2 78.6 L465.8 76.4 L468.4 78.6Z" fill="#fff"/><rect x="463.8" y="79.0" width="4" height="2.4" fill="#fff"/></g></g>
<text x="483.0" y="83.0" font-size="8.3" font-weight="500" fill="#6a6a6a" text-anchor="middle" font-family="Liberation Sans,Noto Sans CJK SC,sans-serif" stroke="#ffffff" stroke-width="1.6" stroke-opacity="0.75" paint-order="stroke" stroke-linejoin="round">松园</text>
<g><path d="M435.0 104.4 L437.4 108.0 L439.8 104.4Z" fill="#e0281a"/><circle cx="437.4" cy="100.6" r="5.2" fill="#e0281a"/><g transform="translate(437.4 100.6) scale(1.13) translate(-437.4 -100.6)"><text x="437.4" y="103.0" font-size="7" font-weight="bold" fill="#f8c820" text-anchor="middle" font-family="Liberation Sans,Noto Sans CJK SC,sans-serif">m</text></g></g>
<g><path d="M339.6 121.1 L342.0 124.7 L344.4 121.1Z" fill="#f2a23e"/><circle cx="342.0" cy="117.0" r="5.5" fill="#f2a23e"/><g transform="translate(342.0 117.0) scale(1.20) translate(-342.0 -117.0)"><path d="M339.4 116.6 L342.0 114.4 L344.6 116.6Z" fill="#fff"/><rect x="340.0" y="117.0" width="4" height="2.4" fill="#fff"/></g></g>
<g><path d="M482.8 127.6 L485.2 131.2 L487.6 127.6Z" fill="#3aa4ea"/><circle cx="485.2" cy="123.5" r="5.5" fill="#3aa4ea"/><g transform="translate(485.2 123.5) scale(1.20) translate(-485.2 -123.5)"><rect x="483.4" y="121.1" width="3.6" height="4.8" rx="0.5" fill="#fff"/></g></g>
<text x="240.0" y="181.0" font-size="7.9" font-weight="500" fill="#6a6a6a" text-anchor="middle" font-family="Liberation Sans,Noto Sans CJK SC,sans-serif" stroke="#ffffff" stroke-width="1.6" stroke-opacity="0.75" paint-order="stroke" stroke-linejoin="round">广州中医药大学</text>
<text x="236.0" y="191.8" font-size="7.9" font-weight="500" fill="#6a6a6a" text-anchor="middle" font-family="Liberation Sans,Noto Sans CJK SC,sans-serif" stroke="#ffffff" stroke-width="1.6" stroke-opacity="0.75" paint-order="stroke" stroke-linejoin="round">(三元里</text>
<g><path d="M273.5 186.1 L275.9 189.7 L278.3 186.1Z" fill="#3aa4ea"/><circle cx="275.9" cy="182.0" r="5.5" fill="#3aa4ea"/><g transform="translate(275.9 182.0) scale(1.20) translate(-275.9 -182.0)"><path d="M272.9 181.4 L275.9 179.8 L278.9 181.4 L275.9 183.0Z" fill="#fff"/><path d="M274.3 182.8 Q275.9 184.8 277.5 182.8" fill="none" stroke="#fff" stroke-width="0.9"/></g></g>
<g><path d="M228.4 224.9 L230.8 228.5 L233.2 224.9Z" fill="#3aa4ea"/><circle cx="230.8" cy="220.8" r="5.5" fill="#3aa4ea"/><g transform="translate(230.8 220.8) scale(1.20) translate(-230.8 -220.8)"><rect x="228.8" y="218.4" width="4" height="4" rx="1" fill="none" stroke="#fff" stroke-width="0.9"/><path d="M228.6 223.4 H233.0" stroke="#fff" stroke-width="0.8"/></g></g>
<text x="252.0" y="225.5" font-size="8" font-weight="500" fill="#6a6a6a" text-anchor="middle" font-family="Liberation Sans,Noto Sans CJK SC,sans-serif" stroke="#ffffff" stroke-width="1.6" stroke-opacity="0.75" paint-order="stroke" stroke-linejoin="round">广州站</text>
<g><path d="M289.6 222.1 L292.0 225.7 L294.4 222.1Z" fill="#2fc18c"/><circle cx="292.0" cy="218.0" r="5.5" fill="#2fc18c"/><g transform="translate(292.0 218.0) scale(1.20) translate(-292.0 -218.0)"><rect x="289.8" y="217.6" width="1.6" height="2.8" fill="#fff"/><rect x="292.2" y="215.6" width="1.8" height="4.8" fill="#fff"/><rect x="289.4" y="220.0" width="5.2" height="0.8" fill="#fff"/></g></g>
<text x="293.5" y="233.9" font-size="8.1" font-weight="500" fill="#6a6a6a" text-anchor="middle" font-family="Liberation Sans,Noto Sans CJK SC,sans-serif" stroke="#ffffff" stroke-width="1.6" stroke-opacity="0.75" paint-order="stroke" stroke-linejoin="round">广州雕塑公园</text>
<g><path d="M217.1 205.7 L219.5 209.3 L221.9 205.7Z" fill="#3aa4ea"/><circle cx="219.5" cy="201.6" r="5.5" fill="#3aa4ea"/><g transform="translate(219.5 201.6) scale(1.20) translate(-219.5 -201.6)"><rect x="217.5" y="199.2" width="4" height="4" rx="1" fill="none" stroke="#fff" stroke-width="0.9"/><path d="M217.3 204.2 H221.7" stroke="#fff" stroke-width="0.8"/></g></g>
<g><path d="M218.6 241.6 L221.0 245.2 L223.4 241.6Z" fill="#9a6ae8"/><circle cx="221.0" cy="237.5" r="5.5" fill="#9a6ae8"/><g transform="translate(221.0 237.5) scale(1.20) translate(-221.0 -237.5)"><path d="M218.8 235.9 H223.2 V239.5 Q221.0 240.5 218.8 239.5Z" fill="#fff"/><path d="M220.0 237.1 Q221.0 238.5 222.0 237.1" fill="none" stroke="#9a6ae8" stroke-width="0.7"/></g></g>
<text x="226.0" y="155.3" font-size="8.1" font-weight="500" fill="#555" text-anchor="middle" font-family="Liberation Sans,Noto Sans CJK SC,sans-serif" stroke="#ffffff" stroke-width="1.6" stroke-opacity="0.75" paint-order="stroke" stroke-linejoin="round">广园中路</text>
<g><path d="M527.9 107.5 L530.3 111.1 L532.7 107.5Z" fill="#3aa4ea"/><circle cx="530.3" cy="103.4" r="5.5" fill="#3aa4ea"/><g transform="translate(530.3 103.4) scale(1.20) translate(-530.3 -103.4)"><path d="M528.1 101.8 H532.5 V105.4 Q530.3 106.4 528.1 105.4Z" fill="#fff"/><path d="M529.3 103.0 Q530.3 104.4 531.3 103.0" fill="none" stroke="#9a6ae8" stroke-width="0.7"/></g></g>
<text x="563.0" y="108.0" font-size="8.3" font-weight="500" fill="#6a6a6a" text-anchor="middle" font-family="Liberation Sans,Noto Sans CJK SC,sans-serif" stroke="#ffffff" stroke-width="1.6" stroke-opacity="0.75" paint-order="stroke" stroke-linejoin="round">信达金茂广场</text>
<text x="575.5" y="132.2" font-size="8.2" font-weight="500" fill="#3a3a3a" text-anchor="middle" font-family="Liberation Sans,Noto Sans CJK SC,sans-serif" stroke="#ffffff" stroke-width="1.6" stroke-opacity="0.75" paint-order="stroke" stroke-linejoin="round">沙河立交</text>
<rect x="560.2" y="160.6" width="27" height="6.8" rx="3.4" fill="#8a6ad0"/><text x="573.7" y="166.0" font-size="5.6" font-weight="bold" fill="#fff" text-anchor="middle" font-family="Liberation Sans,Noto Sans CJK SC,sans-serif">6号线</text>
<text x="684.0" y="101.6" font-size="8.3" font-weight="500" fill="#6a6a6a" text-anchor="middle" font-family="Liberation Sans,Noto Sans CJK SC,sans-serif" stroke="#ffffff" stroke-width="1.6" stroke-opacity="0.75" paint-order="stroke" stroke-linejoin="round">长湴公园</text>
<g><path d="M707.2 101.7 L709.6 105.3 L712.0 101.7Z" fill="#2fc18c"/><circle cx="709.6" cy="97.6" r="5.5" fill="#2fc18c"/><g transform="translate(709.6 97.6) scale(1.20) translate(-709.6 -97.6)"><rect x="707.4" y="97.2" width="1.6" height="2.8" fill="#fff"/><rect x="709.8" y="95.2" width="1.8" height="4.8" fill="#fff"/><rect x="707.0" y="99.6" width="5.2" height="0.8" fill="#fff"/></g></g>
<text x="735.3" y="147.6" font-size="8.2" font-weight="500" fill="#3a3a3a" text-anchor="middle" font-family="Liberation Sans,Noto Sans CJK SC,sans-serif" stroke="#ffffff" stroke-width="1.6" stroke-opacity="0.75" paint-order="stroke" stroke-linejoin="round">岑村立交</text>
<g><path d="M702.2 176.7 L704.6 180.3 L707.0 176.7Z" fill="#3aa4ea"/><circle cx="704.6" cy="172.6" r="5.5" fill="#3aa4ea"/><g transform="translate(704.6 172.6) scale(1.20) translate(-704.6 -172.6)"><path d="M701.6 172.0 L704.6 170.4 L707.6 172.0 L704.6 173.6Z" fill="#fff"/><path d="M703.0 173.4 Q704.6 175.4 706.2 173.4" fill="none" stroke="#fff" stroke-width="0.9"/></g></g>
<text x="738.0" y="177.5" font-size="8.3" font-weight="500" fill="#6a6a6a" text-anchor="middle" font-family="Liberation Sans,Noto Sans CJK SC,sans-serif" stroke="#ffffff" stroke-width="1.6" stroke-opacity="0.75" paint-order="stroke" stroke-linejoin="round">华南农业大学</text>
<g><path d="M655.0 192.9 L657.4 196.5 L659.8 192.9Z" fill="#3aa4ea"/><circle cx="657.4" cy="188.8" r="5.5" fill="#3aa4ea"/><g transform="translate(657.4 188.8) scale(1.20) translate(-657.4 -188.8)"><path d="M654.4 188.2 L657.4 186.6 L660.4 188.2 L657.4 189.8Z" fill="#fff"/><path d="M655.8 189.6 Q657.4 191.6 659.0 189.6" fill="none" stroke="#fff" stroke-width="0.9"/></g></g>
<text x="657.5" y="204.4" font-size="8.3" font-weight="500" fill="#6a6a6a" text-anchor="middle" font-family="Liberation Sans,Noto Sans CJK SC,sans-serif" stroke="#ffffff" stroke-width="1.6" stroke-opacity="0.75" paint-order="stroke" stroke-linejoin="round">华南理工大学</text>
<text x="657.0" y="215.0" font-size="8.3" font-weight="500" fill="#6a6a6a" text-anchor="middle" font-family="Liberation Sans,Noto Sans CJK SC,sans-serif" stroke="#ffffff" stroke-width="1.6" stroke-opacity="0.75" paint-order="stroke" stroke-linejoin="round">(五山校区)</text>
<g><path d="M554.3 220.7 L556.7 224.3 L559.1 220.7Z" fill="#3aa4ea"/><circle cx="556.7" cy="216.6" r="5.5" fill="#3aa4ea"/><g transform="translate(556.7 216.6) scale(1.20) translate(-556.7 -216.6)"><rect x="554.7" y="214.2" width="4" height="4" rx="1" fill="none" stroke="#fff" stroke-width="0.9"/><path d="M554.5 219.2 H558.9" stroke="#fff" stroke-width="0.8"/></g></g>
<text x="557.4" y="233.1" font-size="8.3" font-weight="500" fill="#6a6a6a" text-anchor="middle" font-family="Liberation Sans,Noto Sans CJK SC,sans-serif" stroke="#ffffff" stroke-width="1.6" stroke-opacity="0.75" paint-order="stroke" stroke-linejoin="round">广州东站</text>
<g><path d="M856.3 125.6 L858.7 129.2 L861.1 125.6Z" fill="#a8574a"/><circle cx="858.7" cy="122.4" r="4.6" fill="#a8574a"/><g transform="translate(858.7 122.4) scale(1.00) translate(-858.7 -122.4)"><circle cx="858.7" cy="122.4" r="1.6" fill="#fff"/></g></g>
<text x="859.2" y="139.0" font-size="8.3" font-weight="500" fill="#6a6a6a" text-anchor="middle" font-family="Liberation Sans,Noto Sans CJK SC,sans-serif" stroke="#ffffff" stroke-width="1.6" stroke-opacity="0.75" paint-order="stroke" stroke-linejoin="round">广州市交警支队</text>
<text x="922.0" y="127.4" font-size="8.3" font-weight="500" fill="#6a6a6a" text-anchor="middle" font-family="Liberation Sans,Noto Sans CJK SC,sans-serif" stroke="#ffffff" stroke-width="1.6" stroke-opacity="0.75" paint-order="stroke" stroke-linejoin="round">万科广场</text>
<g><path d="M945.8 127.5 L948.2 131.1 L950.6 127.5Z" fill="#9a6ae8"/><circle cx="948.2" cy="123.4" r="5.5" fill="#9a6ae8"/><g transform="translate(948.2 123.4) scale(1.20) translate(-948.2 -123.4)"><path d="M946.0 121.8 H950.4 V125.4 Q948.2 126.4 946.0 125.4Z" fill="#fff"/><path d="M947.2 123.0 Q948.2 124.4 949.2 123.0" fill="none" stroke="#9a6ae8" stroke-width="0.7"/></g></g>
<rect x="981.9" y="125.0" width="30" height="6.8" rx="3.4" fill="#3f93c8"/><text x="996.9" y="130.4" font-size="5.6" font-weight="bold" fill="#fff" text-anchor="middle" font-family="Liberation Sans,Noto Sans CJK SC,sans-serif">21号线</text>
<text x="1041.0" y="171.8" font-size="8" font-weight="500" fill="#555" text-anchor="middle" font-family="Liberation Sans,Noto Sans CJK SC,sans-serif" stroke="#ffffff" stroke-width="1.6" stroke-opacity="0.75" paint-order="stroke" stroke-linejoin="round">光谱西路</text>
<g><path d="M947.7 187.3 L950.1 190.9 L952.5 187.3Z" fill="#3aa4ea"/><circle cx="950.1" cy="183.2" r="5.5" fill="#3aa4ea"/><g transform="translate(950.1 183.2) scale(1.20) translate(-950.1 -183.2)"><path d="M947.1 182.6 L950.1 181.0 L953.1 182.6 L950.1 184.2Z" fill="#fff"/><path d="M948.5 184.0 Q950.1 186.0 951.7 184.0" fill="none" stroke="#fff" stroke-width="0.9"/></g></g>
<text x="951.7" y="199.7" font-size="8.3" font-weight="500" fill="#6a6a6a" text-anchor="middle" font-family="Liberation Sans,Noto Sans CJK SC,sans-serif" stroke="#ffffff" stroke-width="1.6" stroke-opacity="0.75" paint-order="stroke" stroke-linejoin="round">私立华联大学</text>
<text x="828.2" y="208.9" font-size="8.2" font-weight="500" fill="#3a3a3a" text-anchor="middle" font-family="Liberation Sans,Noto Sans CJK SC,sans-serif" stroke="#ffffff" stroke-width="1.6" stroke-opacity="0.75" paint-order="stroke" stroke-linejoin="round">岑村立交</text>
<text x="920.8" y="211.7" font-size="8.2" font-weight="500" fill="#3a3a3a" text-anchor="middle" font-family="Liberation Sans,Noto Sans CJK SC,sans-serif" stroke="#ffffff" stroke-width="1.6" stroke-opacity="0.75" paint-order="stroke" stroke-linejoin="round">黄村立交</text>
<text x="1048.0" y="203.9" font-size="8.3" font-weight="500" fill="#6a6a6a" text-anchor="start" font-family="Liberation Sans,Noto Sans CJK SC,sans-serif" stroke="#ffffff" stroke-width="1.6" stroke-opacity="0.75" paint-order="stroke" stroke-linejoin="round">广东省</text>
<text x="1046.0" y="215.0" font-size="8.3" font-weight="500" fill="#6a6a6a" text-anchor="start" font-family="Liberation Sans,Noto Sans CJK SC,sans-serif" stroke="#ffffff" stroke-width="1.6" stroke-opacity="0.75" paint-order="stroke" stroke-linejoin="round">商务技</text>
<g><path d="M1063.9 191.5 L1066.3 195.1 L1068.7 191.5Z" fill="#3aa4ea"/><circle cx="1066.3" cy="187.4" r="5.5" fill="#3aa4ea"/><g transform="translate(1066.3 187.4) scale(1.20) translate(-1066.3 -187.4)"><path d="M1063.3 186.8 L1066.3 185.2 L1069.3 186.8 L1066.3 188.4Z" fill="#fff"/><path d="M1064.7 188.2 Q1066.3 190.2 1067.9 188.2" fill="none" stroke="#fff" stroke-width="0.9"/></g></g>
<text x="1041.3" y="80.2" font-size="7.9" font-weight="500" fill="#6a6a6a" text-anchor="middle" font-family="Liberation Sans,Noto Sans CJK SC,sans-serif" stroke="#ffffff" stroke-width="1.6" stroke-opacity="0.75" paint-order="stroke" stroke-linejoin="round">天河大观</text>
<text x="1055.0" y="107.8" font-size="7.9" font-weight="500" fill="#666" text-anchor="middle" font-family="Liberation Sans,Noto Sans CJK SC,sans-serif" transform="rotate(-52 1055.0 105.0)" stroke="#ffffff" stroke-width="1.6" stroke-opacity="0.75" paint-order="stroke" stroke-linejoin="round">凤凰路</text>
<text x="1037.0" y="244.2" font-size="8.3" font-weight="500" fill="#666" text-anchor="middle" font-family="Liberation Sans,Noto Sans CJK SC,sans-serif" stroke="#ffffff" stroke-width="1.6" stroke-opacity="0.75" paint-order="stroke" stroke-linejoin="round">悦景路</text>
<g><path d="M266.5 265.5 L268.9 269.1 L271.3 265.5Z" fill="#2fc18c"/><circle cx="268.9" cy="261.4" r="5.5" fill="#2fc18c"/><g transform="translate(268.9 261.4) scale(1.20) translate(-268.9 -261.4)"><rect x="266.7" y="261.0" width="1.6" height="2.8" fill="#fff"/><rect x="269.1" y="259.0" width="1.8" height="4.8" fill="#fff"/><rect x="266.3" y="263.4" width="5.2" height="0.8" fill="#fff"/></g></g>
<text x="296.0" y="266.0" font-size="8.3" font-weight="500" fill="#6a6a6a" text-anchor="middle" font-family="Liberation Sans,Noto Sans CJK SC,sans-serif" stroke="#ffffff" stroke-width="1.6" stroke-opacity="0.75" paint-order="stroke" stroke-linejoin="round">越秀公园</text>
<text x="213.0" y="286.5" font-size="8.1" font-weight="500" fill="#6a6a6a" text-anchor="start" font-family="Liberation Sans,Noto Sans CJK SC,sans-serif" stroke="#ffffff" stroke-width="1.6" stroke-opacity="0.75" paint-order="stroke" stroke-linejoin="round">花湖公园</text>
<text x="397.7" y="249.3" font-size="8.6" font-weight="500" fill="#333" text-anchor="middle" font-family="Liberation Sans,Noto Sans CJK SC,sans-serif" transform="rotate(-14 397.7 246.2)" stroke="#ffffff" stroke-width="1.6" stroke-opacity="0.75" paint-order="stroke" stroke-linejoin="round">恒福路</text>
<text x="396.3" y="297.0" font-size="9.4" font-weight="500" fill="#2e2e2e" text-anchor="middle" font-family="Liberation Sans,Noto Sans CJK SC,sans-serif" transform="rotate(11 396.3 293.6)" stroke="#ffffff" stroke-width="1.6" stroke-opacity="0.75" paint-order="stroke" stroke-linejoin="round">环市东路</text>
<text x="431.4" y="319.1" font-size="9.2" font-weight="500" fill="#2e2e2e" text-anchor="middle" font-family="Liberation Sans,Noto Sans CJK SC,sans-serif" transform="rotate(-7 431.4 315.8)" stroke="#ffffff" stroke-width="1.6" stroke-opacity="0.75" paint-order="stroke" stroke-linejoin="round">东风东路</text>
<text x="211.0" y="312.7" font-size="9.2" font-weight="500" fill="#2e2e2e" text-anchor="start" font-family="Liberation Sans,Noto Sans CJK SC,sans-serif" stroke="#ffffff" stroke-width="1.6" stroke-opacity="0.75" paint-order="stroke" stroke-linejoin="round">风西路</text>
<text x="275.3" y="331.2" font-size="10.4" font-weight="400" fill="#808080" text-anchor="middle" font-family="Liberation Sans,Noto Sans CJK SC,sans-serif" stroke="#ffffff" stroke-width="1.6" stroke-opacity="0.75" paint-order="stroke" stroke-linejoin="round">越秀区</text>
<text x="321.9" y="341.9" font-size="9.2" font-weight="500" fill="#2e2e2e" text-anchor="middle" font-family="Liberation Sans,Noto Sans CJK SC,sans-serif" stroke="#ffffff" stroke-width="1.6" stroke-opacity="0.75" paint-order="stroke" stroke-linejoin="round">中山四路</text>
<text x="442.1" y="350.8" font-size="9.2" font-weight="500" fill="#2e2e2e" text-anchor="middle" font-family="Liberation Sans,Noto Sans CJK SC,sans-serif" transform="rotate(-14 442.1 347.5)" stroke="#ffffff" stroke-width="1.6" stroke-opacity="0.75" paint-order="stroke" stroke-linejoin="round">内环路</text>
<text x="463.7" y="284.6" font-size="8.3" font-weight="500" fill="#6a6a6a" text-anchor="middle" font-family="Liberation Sans,Noto Sans CJK SC,sans-serif" stroke="#ffffff" stroke-width="1.6" stroke-opacity="0.75" paint-order="stroke" stroke-linejoin="round">广州动物园</text>
<text x="253.4" y="367.0" font-size="8.3" font-weight="500" fill="#555" text-anchor="middle" font-family="Liberation Sans,Noto Sans CJK SC,sans-serif" stroke="#ffffff" stroke-width="1.6" stroke-opacity="0.75" paint-order="stroke" stroke-linejoin="round">解</text>
<text x="253.4" y="376.2" font-size="8.3" font-weight="500" fill="#555" text-anchor="middle" font-family="Liberation Sans,Noto Sans CJK SC,sans-serif" stroke="#ffffff" stroke-width="1.6" stroke-opacity="0.75" paint-order="stroke" stroke-linejoin="round">放</text>
<text x="253.4" y="385.4" font-size="8.3" font-weight="500" fill="#555" text-anchor="middle" font-family="Liberation Sans,Noto Sans CJK SC,sans-serif" stroke="#ffffff" stroke-width="1.6" stroke-opacity="0.75" paint-order="stroke" stroke-linejoin="round">中</text>
<text x="253.4" y="394.6" font-size="8.3" font-weight="500" fill="#555" text-anchor="middle" font-family="Liberation Sans,Noto Sans CJK SC,sans-serif" stroke="#ffffff" stroke-width="1.6" stroke-opacity="0.75" paint-order="stroke" stroke-linejoin="round">路</text>
<rect x="273.6" y="380.1" width="27" height="6.8" rx="3.4" fill="#8a6ad0"/><text x="287.1" y="385.5" font-size="5.6" font-weight="bold" fill="#fff" text-anchor="middle" font-family="Liberation Sans,Noto Sans CJK SC,sans-serif">6号线</text>
<g><path d="M394.4 396.1 L396.8 399.7 L399.2 396.1Z" fill="#2fc18c"/><circle cx="396.8" cy="392.0" r="5.5" fill="#2fc18c"/><g transform="translate(396.8 392.0) scale(1.20) translate(-396.8 -392.0)"><rect x="394.6" y="391.6" width="1.6" height="2.8" fill="#fff"/><rect x="397.0" y="389.6" width="1.8" height="4.8" fill="#fff"/><rect x="394.2" y="394.0" width="5.2" height="0.8" fill="#fff"/></g></g>
<text x="426.5" y="397.2" font-size="8.3" font-weight="500" fill="#6a6a6a" text-anchor="middle" font-family="Liberation Sans,Noto Sans CJK SC,sans-serif" stroke="#ffffff" stroke-width="1.6" stroke-opacity="0.75" paint-order="stroke" stroke-linejoin="round">东山湖公园</text>
<text x="482.0" y="352.7" font-size="8.1" font-weight="500" fill="#9a9a9a" text-anchor="middle" font-family="Liberation Sans,Noto Sans CJK SC,sans-serif" stroke="#ffffff" stroke-width="1.6" stroke-opacity="0.75" paint-order="stroke" stroke-linejoin="round">南方报业集团</text>
<text x="484.0" y="362.9" font-size="8.1" font-weight="500" fill="#9a9a9a" text-anchor="middle" font-family="Liberation Sans,Noto Sans CJK SC,sans-serif" stroke="#ffffff" stroke-width="1.6" stroke-opacity="0.75" paint-order="stroke" stroke-linejoin="round">(中)</text>
<text x="520.9" y="306.3" font-size="9.2" font-weight="500" fill="#2e2e2e" text-anchor="middle" font-family="Liberation Sans,Noto Sans CJK SC,sans-serif" stroke="#ffffff" stroke-width="1.6" stroke-opacity="0.75" paint-order="stroke" stroke-linejoin="round">天河路</text>
<text x="647.1" y="243.1" font-size="8.8" font-weight="500" fill="#333" text-anchor="middle" font-family="Liberation Sans,Noto Sans CJK SC,sans-serif" transform="rotate(8 647.1 239.9)" stroke="#ffffff" stroke-width="1.6" stroke-opacity="0.75" paint-order="stroke" stroke-linejoin="round">广园快速路</text>
<text x="786.0" y="269.2" font-size="8.8" font-weight="500" fill="#333" text-anchor="middle" font-family="Liberation Sans,Noto Sans CJK SC,sans-serif" transform="rotate(22 786.0 266.0)" stroke="#ffffff" stroke-width="1.6" stroke-opacity="0.75" paint-order="stroke" stroke-linejoin="round">广园快速路</text>
<g><path d="M555.7 260.5 L558.1 264.1 L560.5 260.5Z" fill="#9a6ae8"/><circle cx="558.1" cy="256.4" r="5.5" fill="#9a6ae8"/><g transform="translate(558.1 256.4) scale(1.20) translate(-558.1 -256.4)"><path d="M555.9 254.8 H560.3 V258.4 Q558.1 259.4 555.9 258.4Z" fill="#fff"/><path d="M557.1 256.0 Q558.1 257.4 559.1 256.0" fill="none" stroke="#9a6ae8" stroke-width="0.7"/></g></g>
<text x="558.1" y="274.1" font-size="8.3" font-weight="500" fill="#6a6a6a" text-anchor="middle" font-family="Liberation Sans,Noto Sans CJK SC,sans-serif" stroke="#ffffff" stroke-width="1.6" stroke-opacity="0.75" paint-order="stroke" stroke-linejoin="round">中天购物城</text>
<text x="576.7" y="293.0" font-size="8.3" font-weight="500" fill="#555" text-anchor="middle" font-family="Liberation Sans,Noto Sans CJK SC,sans-serif" stroke="#ffffff" stroke-width="1.6" stroke-opacity="0.75" paint-order="stroke" stroke-linejoin="round">体</text>
<text x="576.7" y="302.2" font-size="8.3" font-weight="500" fill="#555" text-anchor="middle" font-family="Liberation Sans,Noto Sans CJK SC,sans-serif" stroke="#ffffff" stroke-width="1.6" stroke-opacity="0.75" paint-order="stroke" stroke-linejoin="round">育</text>
<text x="576.7" y="311.4" font-size="8.3" font-weight="500" fill="#555" text-anchor="middle" font-family="Liberation Sans,Noto Sans CJK SC,sans-serif" stroke="#ffffff" stroke-width="1.6" stroke-opacity="0.75" paint-order="stroke" stroke-linejoin="round">东</text>
<text x="576.7" y="320.6" font-size="8.3" font-weight="500" fill="#555" text-anchor="middle" font-family="Liberation Sans,Noto Sans CJK SC,sans-serif" stroke="#ffffff" stroke-width="1.6" stroke-opacity="0.75" paint-order="stroke" stroke-linejoin="round">路</text>
<g><path d="M685.6 280.1 L688.0 283.7 L690.4 280.1Z" fill="#3aa4ea"/><circle cx="688.0" cy="276.0" r="5.5" fill="#3aa4ea"/><g transform="translate(688.0 276.0) scale(1.20) translate(-688.0 -276.0)"><path d="M685.0 275.4 L688.0 273.8 L691.0 275.4 L688.0 277.0Z" fill="#fff"/><path d="M686.4 276.8 Q688.0 278.8 689.6 276.8" fill="none" stroke="#fff" stroke-width="0.9"/></g></g>
<text x="688.8" y="291.6" font-size="8.3" font-weight="500" fill="#6a6a6a" text-anchor="middle" font-family="Liberation Sans,Noto Sans CJK SC,sans-serif" stroke="#ffffff" stroke-width="1.6" stroke-opacity="0.75" paint-order="stroke" stroke-linejoin="round">华南师范大学</text>
<text x="688.8" y="301.4" font-size="8.3" font-weight="500" fill="#6a6a6a" text-anchor="middle" font-family="Liberation Sans,Noto Sans CJK SC,sans-serif" stroke="#ffffff" stroke-width="1.6" stroke-opacity="0.75" paint-order="stroke" stroke-linejoin="round">(石牌校区)</text>
<rect x="537.7" y="310.8" width="20" height="6.8" rx="3.4" fill="#e8963a"/><text x="547.7" y="316.2" font-size="5.6" font-weight="bold" fill="#fff" text-anchor="middle" font-family="Liberation Sans,Noto Sans CJK SC,sans-serif">3号线</text>
<text x="743.5" y="316.0" font-size="8.3" font-weight="500" fill="#666" text-anchor="middle" font-family="Liberation Sans,Noto Sans CJK SC,sans-serif" stroke="#ffffff" stroke-width="1.6" stroke-opacity="0.75" paint-order="stroke" stroke-linejoin="round">天</text>
<text x="743.5" y="325.0" font-size="8.3" font-weight="500" fill="#666" text-anchor="middle" font-family="Liberation Sans,Noto Sans CJK SC,sans-serif" stroke="#ffffff" stroke-width="1.6" stroke-opacity="0.75" paint-order="stroke" stroke-linejoin="round">府</text>
<text x="743.5" y="334.0" font-size="8.3" font-weight="500" fill="#666" text-anchor="middle" font-family="Liberation Sans,Noto Sans CJK SC,sans-serif" stroke="#ffffff" stroke-width="1.6" stroke-opacity="0.75" paint-order="stroke" stroke-linejoin="round">路</text>
<rect x="756.9" y="301.6" width="30" height="6.8" rx="3.4" fill="#3f93c8"/><text x="771.9" y="307.0" font-size="5.6" font-weight="bold" fill="#fff" text-anchor="middle" font-family="Liberation Sans,Noto Sans CJK SC,sans-serif">21号线</text>
<text x="690.9" y="353.3" font-size="8.2" font-weight="500" fill="#3a3a3a" text-anchor="middle" font-family="Liberation Sans,Noto Sans CJK SC,sans-serif" stroke="#ffffff" stroke-width="1.6" stroke-opacity="0.75" paint-order="stroke" stroke-linejoin="round">黄埔立交</text>
<text x="741.6" y="356.2" font-size="10.4" font-weight="400" fill="#808080" text-anchor="middle" font-family="Liberation Sans,Noto Sans CJK SC,sans-serif" stroke="#ffffff" stroke-width="1.6" stroke-opacity="0.75" paint-order="stroke" stroke-linejoin="round">天河区</text>
<text x="532.4" y="379.2" font-size="8.3" font-weight="500" fill="#6a6a6a" text-anchor="middle" font-family="Liberation Sans,Noto Sans CJK SC,sans-serif" stroke="#ffffff" stroke-width="1.6" stroke-opacity="0.75" paint-order="stroke" stroke-linejoin="round">花城广场</text>
<g><path d="M554.3 378.5 L556.7 382.1 L559.1 378.5Z" fill="#3aa4ea"/><circle cx="556.7" cy="374.4" r="5.5" fill="#3aa4ea"/><g transform="translate(556.7 374.4) scale(1.20) translate(-556.7 -374.4)"><path d="M554.5 372.8 H558.9 V376.4 Q556.7 377.4 554.5 376.4Z" fill="#fff"/><path d="M555.7 374.0 Q556.7 375.4 557.7 374.0" fill="none" stroke="#9a6ae8" stroke-width="0.7"/></g></g>
<g><path d="M626.6 373.9 L629.0 377.5 L631.4 373.9Z" fill="#2fc18c"/><circle cx="629.0" cy="369.8" r="5.5" fill="#2fc18c"/><g transform="translate(629.0 369.8) scale(1.20) translate(-629.0 -369.8)"><rect x="626.8" y="369.4" width="1.6" height="2.8" fill="#fff"/><rect x="629.2" y="367.4" width="1.8" height="4.8" fill="#fff"/><rect x="626.4" y="371.8" width="5.2" height="0.8" fill="#fff"/></g></g>
<text x="629.0" y="386.9" font-size="8.3" font-weight="500" fill="#6a6a6a" text-anchor="middle" font-family="Liberation Sans,Noto Sans CJK SC,sans-serif" stroke="#ffffff" stroke-width="1.6" stroke-opacity="0.75" paint-order="stroke" stroke-linejoin="round">珠江公园</text>
<text x="989.6" y="252.7" font-size="8.3" font-weight="500" fill="#666" text-anchor="middle" font-family="Liberation Sans,Noto Sans CJK SC,sans-serif" stroke="#ffffff" stroke-width="1.6" stroke-opacity="0.75" paint-order="stroke" stroke-linejoin="round">奥体路</text>
<g><path d="M981.9 272.3 L984.3 275.9 L986.7 272.3Z" fill="#3aa4ea"/><circle cx="984.3" cy="268.2" r="5.5" fill="#3aa4ea"/><g transform="translate(984.3 268.2) scale(1.20) translate(-984.3 -268.2)"><path d="M982.1 266.6 H986.5 V270.2 Q984.3 271.2 982.1 270.2Z" fill="#fff"/><path d="M983.3 267.8 Q984.3 269.2 985.3 267.8" fill="none" stroke="#9a6ae8" stroke-width="0.7"/></g></g>
<text x="986.4" y="284.6" font-size="8.3" font-weight="500" fill="#6a6a6a" text-anchor="middle" font-family="Liberation Sans,Noto Sans CJK SC,sans-serif" stroke="#ffffff" stroke-width="1.6" stroke-opacity="0.75" paint-order="stroke" stroke-linejoin="round">广东奥体中心</text>
<g><path d="M1001.4 321.1 L1003.8 324.7 L1006.2 321.1Z" fill="#9a6ae8"/><circle cx="1003.8" cy="317.0" r="5.5" fill="#9a6ae8"/><g transform="translate(1003.8 317.0) scale(1.20) translate(-1003.8 -317.0)"><path d="M1001.6 315.4 H1006.0 V319.0 Q1003.8 320.0 1001.6 319.0Z" fill="#fff"/><path d="M1002.8 316.6 Q1003.8 318.0 1004.8 316.6" fill="none" stroke="#9a6ae8" stroke-width="0.7"/></g></g>
<text x="1024.4" y="321.6" font-size="8.3" font-weight="500" fill="#6a6a6a" text-anchor="middle" font-family="Liberation Sans,Noto Sans CJK SC,sans-serif" stroke="#ffffff" stroke-width="1.6" stroke-opacity="0.75" paint-order="stroke" stroke-linejoin="round">优托邦</text>
<text x="941.9" y="316.8" font-size="8.8" font-weight="500" fill="#333" text-anchor="middle" font-family="Liberation Sans,Noto Sans CJK SC,sans-serif" transform="rotate(16 941.9 313.6)" stroke="#ffffff" stroke-width="1.6" stroke-opacity="0.75" paint-order="stroke" stroke-linejoin="round">广园快速路</text>
<text x="807.8" y="309.0" font-size="8.4" font-weight="500" fill="#333" text-anchor="middle" font-family="Liberation Sans,Noto Sans CJK SC,sans-serif" stroke="#ffffff" stroke-width="1.6" stroke-opacity="0.75" paint-order="stroke" stroke-linejoin="round">科</text>
<text x="807.8" y="318.6" font-size="8.4" font-weight="500" fill="#333" text-anchor="middle" font-family="Liberation Sans,Noto Sans CJK SC,sans-serif" stroke="#ffffff" stroke-width="1.6" stroke-opacity="0.75" paint-order="stroke" stroke-linejoin="round">韵</text>
<text x="807.8" y="328.2" font-size="8.4" font-weight="500" fill="#333" text-anchor="middle" font-family="Liberation Sans,Noto Sans CJK SC,sans-serif" stroke="#ffffff" stroke-width="1.6" stroke-opacity="0.75" paint-order="stroke" stroke-linejoin="round">路</text>
<g><path d="M791.5 347.9 L793.9 351.5 L796.3 347.9Z" fill="#3aa4ea"/><circle cx="793.9" cy="343.8" r="5.5" fill="#3aa4ea"/><g transform="translate(793.9 343.8) scale(1.20) translate(-793.9 -343.8)"><path d="M791.7 342.2 H796.1 V345.8 Q793.9 346.8 791.7 345.8Z" fill="#fff"/><path d="M792.9 343.4 Q793.9 344.8 794.9 343.4" fill="none" stroke="#9a6ae8" stroke-width="0.7"/></g></g>
<text x="796.5" y="361.6" font-size="8.3" font-weight="500" fill="#6a6a6a" text-anchor="middle" font-family="Liberation Sans,Noto Sans CJK SC,sans-serif" stroke="#ffffff" stroke-width="1.6" stroke-opacity="0.75" paint-order="stroke" stroke-linejoin="round">广州信息港</text>
<rect x="936.1" y="346.1" width="27" height="6.8" rx="3.4" fill="#4aa86a"/><text x="949.6" y="351.5" font-size="5.6" font-weight="bold" fill="#fff" text-anchor="middle" font-family="Liberation Sans,Noto Sans CJK SC,sans-serif">4号线</text>
<text x="890.0" y="348.9" font-size="8.1" font-weight="500" fill="#666" text-anchor="middle" font-family="Liberation Sans,Noto Sans CJK SC,sans-serif" stroke="#ffffff" stroke-width="1.6" stroke-opacity="0.75" paint-order="stroke" stroke-linejoin="round">车</text>
<text x="888.4" y="357.5" font-size="8.1" font-weight="500" fill="#666" text-anchor="middle" font-family="Liberation Sans,Noto Sans CJK SC,sans-serif" stroke="#ffffff" stroke-width="1.6" stroke-opacity="0.75" paint-order="stroke" stroke-linejoin="round">陂</text>
<text x="886.8" y="366.1" font-size="8.1" font-weight="500" fill="#666" text-anchor="middle" font-family="Liberation Sans,Noto Sans CJK SC,sans-serif" stroke="#ffffff" stroke-width="1.6" stroke-opacity="0.75" paint-order="stroke" stroke-linejoin="round">路</text>
<text x="908.4" y="375.0" font-size="8.3" font-weight="500" fill="#7a9cc0" text-anchor="middle" font-family="Liberation Sans,Noto Sans CJK SC,sans-serif" stroke="#ffffff" stroke-width="1.6" stroke-opacity="0.75" paint-order="stroke" stroke-linejoin="round">车</text>
<text x="908.4" y="384.2" font-size="8.3" font-weight="500" fill="#7a9cc0" text-anchor="middle" font-family="Liberation Sans,Noto Sans CJK SC,sans-serif" stroke="#ffffff" stroke-width="1.6" stroke-opacity="0.75" paint-order="stroke" stroke-linejoin="round">陂</text>
<text x="908.4" y="393.4" font-size="8.3" font-weight="500" fill="#7a9cc0" text-anchor="middle" font-family="Liberation Sans,Noto Sans CJK SC,sans-serif" stroke="#ffffff" stroke-width="1.6" stroke-opacity="0.75" paint-order="stroke" stroke-linejoin="round">涌</text>
<text x="1044.0" y="350.0" font-size="8.2" font-weight="500" fill="#3a3a3a" text-anchor="start" font-family="Liberation Sans,Noto Sans CJK SC,sans-serif" stroke="#ffffff" stroke-width="1.6" stroke-opacity="0.75" paint-order="stroke" stroke-linejoin="round">吉山立</text>
<text x="1059.6" y="362.0" font-size="8.3" font-weight="500" fill="#666" text-anchor="middle" font-family="Liberation Sans,Noto Sans CJK SC,sans-serif" stroke="#ffffff" stroke-width="1.6" stroke-opacity="0.75" paint-order="stroke" stroke-linejoin="round">珠</text>
<text x="1059.6" y="371.0" font-size="8.3" font-weight="500" fill="#666" text-anchor="middle" font-family="Liberation Sans,Noto Sans CJK SC,sans-serif" stroke="#ffffff" stroke-width="1.6" stroke-opacity="0.75" paint-order="stroke" stroke-linejoin="round">吉</text>
<text x="1059.6" y="380.0" font-size="8.3" font-weight="500" fill="#666" text-anchor="middle" font-family="Liberation Sans,Noto Sans CJK SC,sans-serif" stroke="#ffffff" stroke-width="1.6" stroke-opacity="0.75" paint-order="stroke" stroke-linejoin="round">路</text>
<text x="315.6" y="418.8" font-size="8.3" font-weight="500" fill="#8aa4c4" text-anchor="middle" font-family="Liberation Sans,Noto Sans CJK SC,sans-serif" transform="rotate(10 315.6 415.8)" stroke="#ffffff" stroke-width="1.6" stroke-opacity="0.75" paint-order="stroke" stroke-linejoin="round">滨江中路</text>
<text x="253.0" y="427.9" font-size="8" font-weight="500" fill="#6a94c8" text-anchor="middle" font-family="Liberation Sans,Noto Sans CJK SC,sans-serif" transform="rotate(-25 253.0 425.0)" stroke="#ffffff" stroke-width="1.6" stroke-opacity="0.75" paint-order="stroke" stroke-linejoin="round">珠江</text>
<rect x="268.1" y="426.1" width="27" height="6.8" rx="3.4" fill="#3a9cc4"/><text x="281.6" y="431.5" font-size="5.6" font-weight="bold" fill="#fff" text-anchor="middle" font-family="Liberation Sans,Noto Sans CJK SC,sans-serif">2号线</text>
<g><path d="M459.2 431.9 L461.6 435.5 L464.0 431.9Z" fill="#2fc18c"/><circle cx="461.6" cy="427.8" r="5.5" fill="#2fc18c"/><g transform="translate(461.6 427.8) scale(1.20) translate(-461.6 -427.8)"><rect x="459.4" y="427.4" width="1.6" height="2.8" fill="#fff"/><rect x="461.8" y="425.4" width="1.8" height="4.8" fill="#fff"/><rect x="459.0" y="429.8" width="5.2" height="0.8" fill="#fff"/></g></g>
<text x="613.0" y="419.7" font-size="8.3" font-weight="500" fill="#666" text-anchor="middle" font-family="Liberation Sans,Noto Sans CJK SC,sans-serif" stroke="#ffffff" stroke-width="1.6" stroke-opacity="0.75" paint-order="stroke" stroke-linejoin="round">临江大道</text>
<text x="838.8" y="426.6" font-size="8.3" font-weight="500" fill="#666" text-anchor="middle" font-family="Liberation Sans,Noto Sans CJK SC,sans-serif" stroke="#ffffff" stroke-width="1.6" stroke-opacity="0.75" paint-order="stroke" stroke-linejoin="round">临江大道</text>
<g><path d="M991.1 417.1 L993.5 420.7 L995.9 417.1Z" fill="#2fc18c"/><circle cx="993.5" cy="413.0" r="5.5" fill="#2fc18c"/><g transform="translate(993.5 413.0) scale(1.20) translate(-993.5 -413.0)"><rect x="991.3" y="412.6" width="1.6" height="2.8" fill="#fff"/><rect x="993.7" y="410.6" width="1.8" height="4.8" fill="#fff"/><rect x="990.9" y="415.0" width="5.2" height="0.8" fill="#fff"/></g></g>
<text x="994.3" y="429.4" font-size="8.3" font-weight="500" fill="#6a6a6a" text-anchor="middle" font-family="Liberation Sans,Noto Sans CJK SC,sans-serif" stroke="#ffffff" stroke-width="1.6" stroke-opacity="0.75" paint-order="stroke" stroke-linejoin="round">杨桃公园</text>
<text x="682.0" y="439.9" font-size="8.1" font-weight="500" fill="#6a94c8" text-anchor="middle" font-family="Liberation Sans,Noto Sans CJK SC,sans-serif" stroke="#ffffff" stroke-width="1.6" stroke-opacity="0.75" paint-order="stroke" stroke-linejoin="round">珠江</text>
<g><ellipse cx="463" cy="265.6" rx="10" ry="3.6" fill="#2fbf7a"/><path d="M456 264 Q463 256 470 264Z" fill="#1f9a5c"/><circle cx="460.4" cy="262.6" r="1.6" fill="#222"/><circle cx="465.6" cy="262.6" r="1.6" fill="#222"/><ellipse cx="463" cy="264.4" rx="3" ry="2.4" fill="#fff"/></g>
<g>
<rect x="322.6" y="124" width="26" height="7" rx="1.5" fill="#5ab0ee" opacity="0.85"/>
<text x="324" y="129.8" font-size="6.6" font-weight="bold" fill="#fff" font-family="Liberation Sans,Noto Sans CJK SC,sans-serif">1010008</text>
<text x="355" y="137.2" font-size="7.4" font-weight="bold" fill="#35c0e8" font-family="Liberation Sans,Noto Sans CJK SC,sans-serif">3</text>
<rect x="322.6" y="129.6" width="30.6" height="8.6" rx="1.5" fill="#49a6ec"/>
<text x="324.2" y="136.8" font-size="7.6" font-weight="bold" fill="#fff" font-family="Liberation Sans,Noto Sans CJK SC,sans-serif">1010010</text>
<ellipse cx="330" cy="160.6" rx="8" ry="2.2" fill="#000" opacity="0.22"/>
<path d="M320.6 133.4 Q326.6 133 327.6 139.4 Q327.6 147 321.6 157.6 Q313.4 147 313.6 140.4 Q314.2 133.8 320.6 133.4Z" fill="#3cc832"/>
<circle cx="320.6" cy="140.2" r="3.4" fill="#2a9a22"/>
<path d="M326.4 137.6 Q334.6 137.4 335.6 144.4 Q335.4 151 326.6 161.6 Q317.6 151 317.4 144.4 Q318.2 137.8 326.4 137.6Z" fill="#3a3a3a"/>
<circle cx="326.4" cy="145" r="5.4" fill="#5a5a5a"/><circle cx="326.4" cy="145" r="3.4" fill="#2a2a2a"/><circle cx="326.4" cy="145" r="1.6" fill="#6c6c6c"/>
</g>
<g>
<rect x="504" y="335" width="43" height="9.4" rx="1.6" fill="#3f9fe6"/>
<text x="525.5" y="342.6" font-size="7.4" font-weight="bold" fill="#fff" text-anchor="middle" font-family="Liberation Sans,Noto Sans CJK SC,sans-serif">消防中控岗</text>
<ellipse cx="517" cy="373.4" rx="9" ry="2.4" fill="#000" opacity="0.2"/>
<path d="M513.4 342.6 Q523 342.6 523 352.6 Q522.6 361 513.8 374.4 Q504.8 361 504.4 352.6 Q504.6 342.6 513.4 342.6Z" fill="#e0913a"/>
<path d="M508.6 341.4 Q518.4 341.2 519.2 351 Q518.8 359.6 509.6 373.6 Q498.4 359.6 498.2 351 Q498.6 341.6 508.6 341.4Z" fill="#4e9a24"/>
<path d="M508.6 342.4 Q516.4 342.2 517.6 349 Q509 354 499.4 349.4 Q500.4 342.6 508.6 342.4Z" fill="#7cc840" opacity="0.7"/>
<text x="508.6" y="356" font-size="8.4" font-weight="bold" fill="#fff" text-anchor="middle" font-family="Liberation Sans,Noto Sans CJK SC,sans-serif">起</text>
</g>
<g>
<circle cx="235" cy="95.8" r="14.6" fill="#fff" stroke="#b8bcc8" stroke-width="1"/>
<circle cx="235" cy="95.8" r="12.6" fill="#fdfdfd" stroke="#e2e4ea" stroke-width="0.8"/>
<path d="M231.8 88.4 L235 85.4 L238.2 88.4 M231.8 103.2 L235 106.2 L238.2 103.2 M227.4 92.6 L224.4 95.8 L227.4 99 M242.6 92.6 L245.6 95.8 L242.6 99" fill="none" stroke="#5a7cd0" stroke-width="1.5" stroke-linecap="round" stroke-linejoin="round"/>
<rect x="233" y="124" width="4" height="76" fill="#eef0f6" stroke="#b8bccb" stroke-width="0.7"/>
<rect x="233" y="152" width="4" height="48" fill="#a8b8ec"/>
<rect x="229.6" y="114.4" width="10.8" height="10.8" rx="1.4" fill="#fcfcfc" stroke="#b4b8c6" stroke-width="0.8"/>
<path d="M232.4 119.8 H237.6 M235 117.2 V122.4" stroke="#5a7cd0" stroke-width="1.2"/>
<rect x="229.6" y="198.6" width="10.8" height="10.8" rx="1.4" fill="#fcfcfc" stroke="#b4b8c6" stroke-width="0.8"/>
<path d="M232.4 204 H237.6" stroke="#6a7a9a" stroke-width="1.2"/>
<rect x="229.2" y="148.8" width="11.6" height="6" rx="1" fill="#fcfcfc" stroke="#a8acbc" stroke-width="0.8"/>
<path d="M232.2 151.8 H237.8" stroke="#6a7a9a" stroke-width="1.1"/>
<path d="M244.6 134.5 L248.4 129.3 H260.6 Q261.6 129.3 261.6 130.3 V138.7 Q261.6 139.7 260.6 139.7 H248.4Z" fill="#6f9cf0" opacity="0.92"/><text x="254.8" y="137.3" font-size="7.4" fill="#fff" text-anchor="middle" font-family="Liberation Sans,Noto Sans CJK SC,sans-serif">街</text><path d="M244.6 155.6 L248.4 150.4 H260.6 Q261.6 150.4 261.6 151.4 V159.8 Q261.6 160.8 260.6 160.8 H248.4Z" fill="#6f9cf0" opacity="0.92"/><text x="254.8" y="158.4" font-size="7.4" fill="#fff" text-anchor="middle" font-family="Liberation Sans,Noto Sans CJK SC,sans-serif">市</text><path d="M244.6 172.9 L248.4 167.7 H260.6 Q261.6 167.7 261.6 168.7 V177.1 Q261.6 178.1 260.6 178.1 H248.4Z" fill="#6f9cf0" opacity="0.92"/><text x="254.8" y="175.7" font-size="7.4" fill="#fff" text-anchor="middle" font-family="Liberation Sans,Noto Sans CJK SC,sans-serif">省</text><path d="M244.6 190.0 L248.4 184.8 H260.6 Q261.6 184.8 261.6 185.8 V194.2 Q261.6 195.2 260.6 195.2 H248.4Z" fill="#6f9cf0" opacity="0.92"/><text x="254.8" y="192.8" font-size="7.4" fill="#fff" text-anchor="middle" font-family="Liberation Sans,Noto Sans CJK SC,sans-serif">国</text></g>
<g>
<rect x="934.4" y="80" width="45" height="16.4" rx="1.5" fill="#fff" stroke="#e4e4e4" stroke-width="0.6"/>
<text x="939.6" y="91.2" font-size="8.6" fill="#333" font-family="Liberation Sans,Noto Sans CJK SC,sans-serif">广州市</text>
<path d="M970 87 L972.2 89.2 L974.4 87" fill="none" stroke="#aaa" stroke-width="0.8"/>
<rect x="1008" y="82" width="53" height="14" rx="2" fill="#fff" stroke="#d8dce8" stroke-width="0.6"/>
<path d="M1010 82 H1034.4 V96 H1010 Q1008 96 1008 94 V84 Q1008 82 1010 82Z" fill="#7d9de8"/>
<text x="1021.2" y="92.2" font-size="8.6" font-weight="bold" fill="#fff" text-anchor="middle" font-family="Liberation Sans,Noto Sans CJK SC,sans-serif">地图</text>
<text x="1047.6" y="92.2" font-size="8.6" fill="#222" text-anchor="middle" font-family="Liberation Sans,Noto Sans CJK SC,sans-serif">混合</text>
</g></svg>
</div>
<div id="mscroll" class="abs"></div>
<div id="mthumb" class="abs"></div>
<svg class="abs" style="left:1070px;top:76px" width="10" height="10" viewBox="0 0 10 10"><path d="M2 6.5 L5 3.5 L8 6.5" fill="none" stroke="#555" stroke-width="1.1"/></svg>
<div id="bp" class="abs"></div>
<div id="bptabs" class="abs"></div>
<div class="abs bt" style="left:215px;width:53px;background:#fff">GPS</div>
<div class="abs bt" style="left:268px;width:50px;border-right:1px solid #e3e3e3">SOS</div>
<div id="bpdd" class="abs">显示全部</div>
<svg class="abs" style="left:277px;top:465px" width="9" height="6" viewBox="0 0 9 6"><path d="M1 1 L4.5 4.5 L8 1" fill="none" stroke="#444" stroke-width="1"/></svg>
<div id="tbl" class="abs"></div>
<div class="abs th" style="left:305.5px">序号</div>
<div class="abs th" style="left:381.5px">姓名</div>
<div class="abs th" style="left:469px">号码</div>
<div class="abs th" style="left:557.5px">经度</div>
<div class="abs th" style="left:663px">纬度</div>
<div class="abs th" style="left:750px">类型</div>
<div class="abs th" style="left:838.5px">时间</div>
<div class="abs cl" style="left:328.5px"></div>
<div class="abs cl" style="left:433.5px"></div>
<div class="abs cl" style="left:504.5px"></div>
<div class="abs cl" style="left:610.5px"></div>
<div class="abs cl" style="left:715px"></div>
<div class="abs cl" style="left:786px"></div>
<div class="abs cl" style="left:891px"></div>
<div class="abs" style="left:293px;top:477px;width:782px;height:1px;background:#f7f7f7"></div>
<div class="abs" style="left:293px;top:486px;width:782px;height:1px;background:#f7f7f7"></div>
<div class="abs" style="left:293px;top:495px;width:782px;height:1px;background:#f7f7f7"></div>
<div class="abs" style="left:293px;top:504px;width:782px;height:1px;background:#f7f7f7"></div>
<div class="abs" style="left:293px;top:513px;width:782px;height:1px;background:#f7f7f7"></div>
<div class="abs" style="left:293px;top:522px;width:782px;height:1px;background:#f7f7f7"></div>
<div class="abs" style="left:293px;top:531px;width:782px;height:1px;background:#f7f7f7"></div>
<div class="abs" style="left:293px;top:540px;width:782px;height:1px;background:#f7f7f7"></div>
<div class="abs" style="left:293px;top:549px;width:782px;height:1px;background:#f7f7f7"></div>
<div class="abs" style="left:293px;top:558px;width:782px;height:1px;background:#f7f7f7"></div>
<div class="abs" style="left:293px;top:567px;width:782px;height:1px;background:#f7f7f7"></div>
<div id="bpbtn" class="abs"></div>
<svg class="abs" style="left:1060px;top:443px" width="15" height="10" viewBox="0 0 15 10"><path d="M0.5 0.5 H14.5 L7.5 9 Z" fill="#fff"/></svg>
<div id="wm" class="abs">橞科安保集团</div>
<svg class="abs" style="left:833px;top:543px" width="48" height="36" viewBox="0 0 48 36">
<g fill="#fff" stroke="#a0a0a0" stroke-width="0.9">
<path d="M11 2.5 Q20.5 2.5 20.5 10.5 Q20.5 18.5 11 18.5 Q9 18.5 7.4 18 L4 20.5 L4.6 16.6 Q1.5 14.4 1.5 10.5 Q1.5 2.5 11 2.5Z"/>
<path d="M32 6.5 Q45.5 6.5 45.5 18 Q45.5 24 40.6 27.2 L41.6 32.5 L36.2 29.2 Q34.2 29.6 32 29.6 Q18.5 29.6 18.5 18 Q18.5 6.5 32 6.5Z"/>
</g>
<circle cx="7.6" cy="8" r="1.3" fill="none" stroke="#a0a0a0" stroke-width="0.9"/><circle cx="14.6" cy="8" r="1.3" fill="none" stroke="#a0a0a0" stroke-width="0.9"/>
<circle cx="27" cy="15" r="1.7" fill="none" stroke="#a0a0a0" stroke-width="0.9"/><circle cx="37" cy="15" r="1.7" fill="none" stroke="#a0a0a0" stroke-width="0.9"/>
</svg>
<div id="task" class="abs"></div>
<div class="abs" style="left:0;top:579px;width:211px;height:1px;background:#033b56"></div><div class="abs" style="left:185px;top:580px;width:35px;height:28px;background:#f4a56e"></div><div class="abs" style="left:185px;top:605px;width:35px;height:3px;background:#e87a26"></div><div class="abs" style="left:251px;top:580px;width:39px;height:28px;background:#e3ecf0"></div><div class="abs" style="left:119px;top:606px;width:27px;height:2px;background:#9fb2bd"></div><div class="abs" style="left:155px;top:606px;width:22px;height:2px;background:#9fb2bd"></div><div class="abs" style="left:223px;top:606px;width:28px;height:2px;background:#9fb2bd"></div><div class="abs" style="left:255px;top:606px;width:33px;height:2px;background:#9fb2bd"></div><svg class="abs" style="left:11px;top:588px" width="12" height="12" viewBox="0 0 12 12"><path d="M0 1.6 L5.2 0.9 V5.6 H0Z M6 0.8 L12 0 V5.6 H6Z M0 6.4 H5.2 V11.1 L0 10.4Z M6 6.4 H12 V12 L6 11.2Z" fill="#0b0b0b"/></svg><svg class="abs" style="left:44px;top:588px" width="14" height="12" viewBox="0 0 14 12"><rect x="2.2" y="2.6" width="7" height="6.8" fill="none" stroke="#222" stroke-width="1.2"/><path d="M0.6 0.6 V11.4 M11.2 0.6 V4 M11.2 6 V8 M11.2 9.6 V11.4 M13 3 V9" stroke="#222" stroke-width="1"/></svg><div class="abs" style="left:70.5px;top:586px;width:2.2px;height:16px;background:#7f8e96;border-radius:1px"></div><svg class="abs" style="left:89px;top:586px" width="17" height="15" viewBox="0 0 17 15"><path d="M0.5 1.2 H6 L7.4 2.8 H16.5 V6 H0.5Z" fill="#e8b93a"/><rect x="0.5" y="4" width="16" height="10" fill="#f7d568"/><rect x="3" y="7.4" width="11" height="6.6" fill="#3b8fd6"/><rect x="5.6" y="10.4" width="5.8" height="3.6" fill="#f7d568"/></svg><svg class="abs" style="left:123px;top:587px" width="18" height="15" viewBox="0 0 18 15"><rect x="6" y="0.8" width="11.5" height="13.4" rx="1" fill="#b44fd0"/><rect x="13" y="0.8" width="4.5" height="13.4" fill="#d98ae8"/><rect x="0.5" y="2.6" width="10.4" height="10" rx="0.8" fill="#7a1fa2"/><text x="5.7" y="11" font-size="8.6" font-weight="bold" text-anchor="middle" fill="#fff" font-family="Liberation Sans,sans-serif">N</text></svg><svg class="abs" style="left:159px;top:586px" width="16" height="16" viewBox="0 0 16 16"><circle cx="8" cy="8" r="7.6" fill="#e04a3a"/><path d="M8 8 L1.4 4.2 A7.6 7.6 0 0 0 7 15.5 Z" fill="#3aa757"/><path d="M8 8 L7 15.5 A7.6 7.6 0 0 0 15.3 5.6 Z" fill="#f6c636"/><path d="M8 8 L15.3 5.6 A7.6 7.6 0 0 0 1.4 4.2Z" fill="#e04a3a"/><circle cx="8" cy="8" r="3.5" fill="#fff"/><circle cx="8" cy="8" r="2.7" fill="#4a8af4"/></svg><svg class="abs" style="left:194px;top:587px" width="18" height="15" viewBox="0 0 18 15"><ellipse cx="6.4" cy="5.6" rx="6" ry="5" fill="#3fc24a"/><path d="M2.4 9 L1.8 11.6 L4.8 10.2Z" fill="#3fc24a"/><ellipse cx="12.2" cy="9.4" rx="5.2" ry="4.4" fill="#f2f2f2"/><path d="M14.6 12.6 L15.8 14.6 L12.6 13.6Z" fill="#f2f2f2"/><circle cx="10.4" cy="8.4" r="0.7" fill="#9a9a9a"/><circle cx="14" cy="8.4" r="0.7" fill="#9a9a9a"/></svg><svg class="abs" style="left:228px;top:586px" width="18" height="16" viewBox="0 0 18 16"><rect x="0.4" y="0.4" width="16" height="14.6" rx="1" fill="#151515"/><path d="M2.6 3.6 H14.2 L11.4 11.6 L8.4 6.2 L5.4 11.6Z" fill="none" stroke="#e0c06a" stroke-width="1.5" stroke-linejoin="round"/><rect x="11.4" y="9.6" width="6" height="6" rx="1" fill="#3a6fd8"/><text x="14.4" y="14.4" font-size="5" font-weight="bold" text-anchor="middle" fill="#fff" font-family="Liberation Sans,sans-serif">W</text></svg><svg class="abs" style="left:263px;top:586px" width="18" height="15" viewBox="0 0 18 15"><rect x="1" y="8.4" width="13" height="5" rx="1" fill="none" stroke="#555" stroke-width="1.2"/><path d="M9 7 Q9.4 3 13.6 2.4" fill="none" stroke="#666" stroke-width="1.1"/><path d="M11.4 8 Q11.8 5 15 4.6" fill="none" stroke="#666" stroke-width="1.1"/><path d="M7 6 Q7.6 0.8 13 0.6" fill="none" stroke="#888" stroke-width="1"/><rect x="12" y="6" width="5" height="6" fill="#d8e2e6" stroke="#555" stroke-width="0.9"/></svg><svg class="abs" style="left:848px;top:587px" width="8" height="12" viewBox="0 0 8 12"><path d="M2.4 0.4 V3 M5.6 0.4 V3" stroke="#fff" stroke-width="1.1"/><path d="M0.8 3 H7.2 V6.4 Q7.2 8.8 4 8.8 Q0.8 8.8 0.8 6.4Z" fill="#fff" stroke="#c2ccd2" stroke-width="0.6"/><path d="M4 8.8 V11.6" stroke="#fff" stroke-width="1.4"/></svg><div class="abs" style="left:856.5px;top:588.5px;width:25px;height:11px;border:1px solid #f4f8fa;border-radius:2px;background:#cddfe6;box-shadow:0 0 0 0.5px #aab8c0"></div><div class="abs" style="left:858.5px;top:590.5px;width:19px;height:7px;background:#2f9a4a;color:#fff;font-size:6.4px;line-height:7.4px;text-align:center;letter-spacing:-0.2px">100%</div><svg class="abs" style="left:886px;top:591px" width="11" height="7" viewBox="0 0 11 7"><path d="M1 6 L5.5 1.2 L10 6" fill="none" stroke="#222" stroke-width="1.1"/></svg><svg class="abs" style="left:901px;top:588px" width="13" height="13" viewBox="0 0 13 13"><circle cx="6.5" cy="6.5" r="6" fill="#e8d83a"/><circle cx="6.5" cy="6.5" r="4.4" fill="#2fae3c"/><circle cx="6.5" cy="6.5" r="2" fill="#f4f0a0"/><path d="M6.5 4.5 V8.5 M4.5 6.5 H8.5" stroke="#2a8a34" stroke-width="1"/></svg><svg class="abs" style="left:918px;top:589px" width="12" height="11" viewBox="0 0 12 11"><path d="M0.8 3.8 H2.8 L5.4 1.2 V9.8 L2.8 7.2 H0.8Z" fill="none" stroke="#222" stroke-width="0.9"/><path d="M7 3.6 Q8.2 5.5 7 7.4 M8.6 2.4 Q10.4 5.5 8.6 8.6 M10.2 1.2 Q12.6 5.5 10.2 9.8" fill="none" stroke="#222" stroke-width="0.8"/></svg><svg class="abs" style="left:935px;top:591px" width="13" height="7" viewBox="0 0 13 7"><rect x="1.6" y="0.6" width="11" height="5.8" rx="0.6" fill="#141414"/><rect x="0.2" y="2" width="1.6" height="2.6" fill="#141414"/></svg><div class="abs tk" style="left:952.5px;top:588px;font-size:9.6px">英</div><div class="abs tk" style="left:972.5px;top:588.5px;width:10.5px;height:10.5px;border:1px solid #555;background:#f4f8fa;font-size:7.6px;line-height:8.6px;text-align:center">拼</div><div class="abs tk" style="left:993px;top:582.5px;width:47px;text-align:center;font-size:8.9px">16:52</div><div class="abs tk" style="left:990px;top:594.6px;width:53px;text-align:center;font-size:8.9px">2021/12/29</div><svg class="abs" style="left:1051px;top:588px" width="12" height="11" viewBox="0 0 12 11"><path d="M0.6 0.6 H11.4 V8 H7 L5 10.2 V8 H0.6Z" fill="none" stroke="#222" stroke-width="1"/></svg>
</body>
</html>
